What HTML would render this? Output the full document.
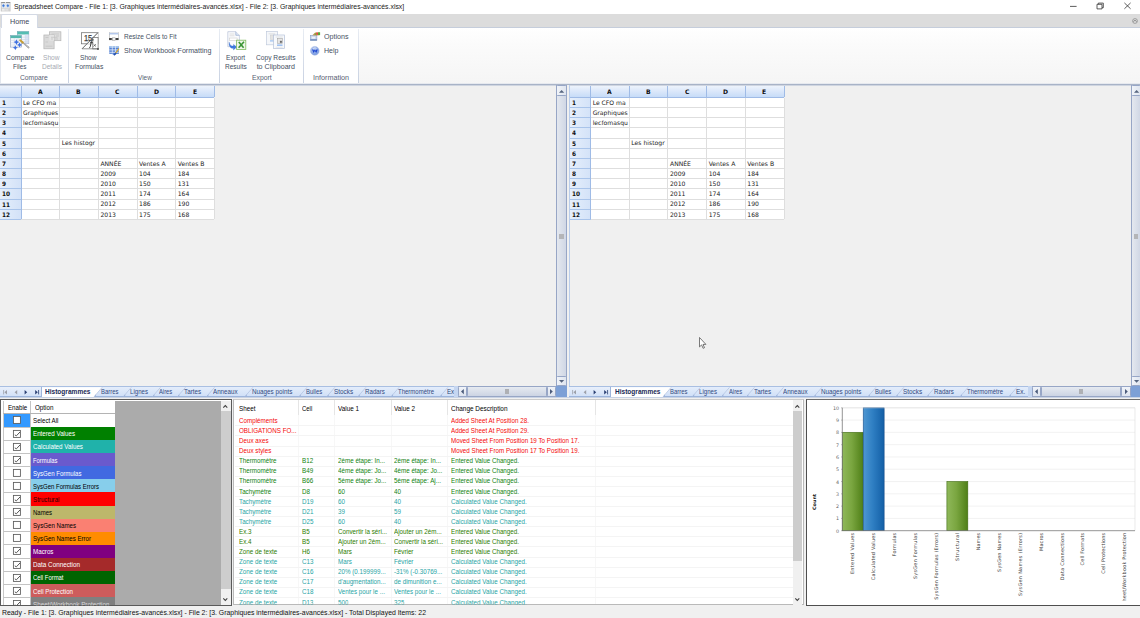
<!DOCTYPE html><html><head><meta charset="utf-8"><title>Spreadsheet Compare</title><style>
*{box-sizing:border-box;margin:0;padding:0}
html,body{width:1140px;height:618px;overflow:hidden;background:#f0f0f0}
body{position:relative;font-family:"Liberation Sans",sans-serif;font-size:7px;color:#000}
.a{position:absolute}
.t{position:absolute;white-space:nowrap;line-height:1;transform-origin:0 50%}
svg{position:absolute;overflow:visible}
</style></head><body>
<div class="a" style="left:0px;top:0px;width:1140px;height:14px;background:#fff;"></div>
<svg style="left:1.0px;top:1.7px" width="9.3" height="9.5" viewBox="0 0 9.3 9.5"><rect x="0" y="0" width="9.3" height="9.5" rx="0.5" fill="#d6d6d6"/><rect x="0.1" y="0.1" width="4.2" height="1" fill="#8c8c8c"/><rect x="4.9" y="0.1" width="4.3" height="1" fill="#8c8c8c"/><rect x="0.5" y="1.1" width="3.8" height="5" fill="#e3e6eb"/><rect x="4.9" y="1.1" width="3.9" height="5" fill="#e3e6eb"/><rect x="4.3" y="0" width="0.6" height="5.6" fill="#f4f4f4"/><path d="M2.45 1.7L4.1 3.7 2.45 5.7 0.8 3.7z" fill="#a9c6f0"/><path d="M6.85 1.7L8.5 3.7 6.85 5.7 5.2 3.7z" fill="#a9c6f0"/><path d="M2.45 2.3L3.7 3.7 2.45 5.1 1.2 3.7z" fill="#3f7ad8"/><path d="M6.85 2.3L8.1 3.7 6.85 5.1 5.6 3.7z" fill="#3f7ad8"/><path d="M0.1 0.1v9.3M9.2 0.1v9.3" stroke="#a8a8a8" stroke-width="0.4"/><rect x="0.9" y="7.2" width="2.7" height="1.3" fill="#f3f3f3"/><rect x="4.4" y="7.4" width="2.6" height="0.9" fill="#ececec"/></svg>
<div class="t" style="left:13.80px;top:4.25px;font-size:7.1px;color:#1a1a1a;font-family:'Liberation Sans',sans-serif;transform:scaleX(0.9693);">Spreadsheet Compare - File 1: [3. Graphiques intermédiaires-avancés.xlsx] - File 2: [3. Graphiques intermédiaires-avancés.xlsx]</div>
<svg style="left:1060px;top:0" width="80" height="14" viewBox="0 0 80 14"><path d="M10 6.4h6.6" stroke="#333" stroke-width="0.8" fill="none"/><path d="M37 4.3h5v4.6h-5zM38.3 4.3V3.1h5v4.6h-1.3" stroke="#333" stroke-width="0.8" fill="none"/><path d="M64.4 2.9l6.2 5.9M70.6 2.9l-6.2 5.9" stroke="#333" stroke-width="0.8" fill="none"/></svg>
<div class="a" style="left:0px;top:14px;width:1140px;height:13px;background:#dcdcdc;"></div>
<div class="a" style="left:0px;top:27px;width:1140px;height:57px;background:linear-gradient(#ffffff,#fbfbfb 30%,#f5f5f5);"></div>
<div class="a" style="left:0px;top:27px;width:358px;height:57px;background:#fff;"></div>
<div class="a" style="left:0px;top:26.6px;width:1140px;height:1px;background:#c5cddb;"></div>
<div class="a" style="left:1.2px;top:14.0px;width:36.4px;height:13.6px;background:#fff;border:1px solid #d3d9e4;border-bottom:none;border-radius:2px 2px 0 0"></div>
<div class="t" style="left:10.00px;top:18.50px;font-size:7.1px;color:#3c4658;font-family:'Liberation Sans',sans-serif;transform:scaleX(1.0139);">Home</div>
<svg style="left:1131.5px;top:18px" width="6" height="6" viewBox="0 0 6 6"><circle cx="3" cy="3" r="2.4" fill="none" stroke="#777" stroke-width="0.6"/><path d="M1.6 3.6L3 2.2l1.4 1.4" stroke="#555" stroke-width="0.7" fill="none"/></svg>
<div class="a" style="left:0px;top:83px;width:1140px;height:1px;background:#e6e9ef;"></div>
<div class="a" style="left:0px;top:84px;width:1140px;height:1px;background:#a8b3c7;"></div>
<div class="a" style="left:0px;top:85px;width:1140px;height:1px;background:#cfd5e0;"></div>
<div class="a" style="left:0px;top:27px;width:1.2px;height:57px;background:#e3e7ee;"></div>
<div class="a" style="left:67.8px;top:28.5px;width:1px;height:54px;background:linear-gradient(#e8ecf3,#c9d2e2);"></div>
<div class="a" style="left:219.1px;top:28.5px;width:1px;height:54px;background:linear-gradient(#e8ecf3,#c9d2e2);"></div>
<div class="a" style="left:302.9px;top:28.5px;width:1px;height:54px;background:linear-gradient(#e8ecf3,#c9d2e2);"></div>
<div class="a" style="left:357.7px;top:28.5px;width:1px;height:54px;background:linear-gradient(#e8ecf3,#c9d2e2);"></div>
<div class="t" style="left:5.80px;top:54.60px;font-size:7.1px;color:#454f62;font-family:'Liberation Sans',sans-serif;transform:scaleX(0.9730);">Compare</div>
<div class="t" style="left:13.30px;top:64.00px;font-size:7.1px;color:#454f62;font-family:'Liberation Sans',sans-serif;transform:scaleX(0.8943);">Files</div>
<div class="t" style="left:43.25px;top:54.60px;font-size:7.1px;color:#a6aab2;font-family:'Liberation Sans',sans-serif;transform:scaleX(0.9296);">Show</div>
<div class="t" style="left:41.50px;top:64.00px;font-size:7.1px;color:#a6aab2;font-family:'Liberation Sans',sans-serif;transform:scaleX(0.9222);">Details</div>
<div class="t" style="left:20.35px;top:75.05px;font-size:7.1px;color:#566072;font-family:'Liberation Sans',sans-serif;transform:scaleX(0.9490);">Compare</div>
<div class="t" style="left:80.45px;top:54.60px;font-size:7.1px;color:#454f62;font-family:'Liberation Sans',sans-serif;transform:scaleX(0.9296);">Show</div>
<div class="t" style="left:74.55px;top:64.00px;font-size:7.1px;color:#454f62;font-family:'Liberation Sans',sans-serif;transform:scaleX(0.9568);">Formulas</div>
<div class="t" style="left:124.20px;top:33.60px;font-size:7.1px;color:#454f62;font-family:'Liberation Sans',sans-serif;transform:scaleX(0.9183);">Resize Cells to Fit</div>
<div class="t" style="left:124.20px;top:47.70px;font-size:7.1px;color:#454f62;font-family:'Liberation Sans',sans-serif;transform:scaleX(1.0011);">Show Workbook Formatting</div>
<div class="t" style="left:137.50px;top:75.05px;font-size:7.1px;color:#566072;font-family:'Liberation Sans',sans-serif;transform:scaleX(0.9049);">View</div>
<div class="t" style="left:226.30px;top:54.60px;font-size:7.1px;color:#454f62;font-family:'Liberation Sans',sans-serif;transform:scaleX(0.9359);">Export</div>
<div class="t" style="left:225.05px;top:64.00px;font-size:7.1px;color:#454f62;font-family:'Liberation Sans',sans-serif;transform:scaleX(0.9173);">Results</div>
<div class="t" style="left:255.75px;top:54.60px;font-size:7.1px;color:#454f62;font-family:'Liberation Sans',sans-serif;transform:scaleX(0.9363);">Copy Results</div>
<div class="t" style="left:256.65px;top:64.00px;font-size:7.1px;color:#454f62;font-family:'Liberation Sans',sans-serif;">to Clipboard</div>
<div class="t" style="left:251.95px;top:75.05px;font-size:7.1px;color:#566072;font-family:'Liberation Sans',sans-serif;transform:scaleX(0.9602);">Export</div>
<div class="t" style="left:323.80px;top:33.70px;font-size:7.1px;color:#454f62;font-family:'Liberation Sans',sans-serif;transform:scaleX(1.0019);">Options</div>
<div class="t" style="left:323.80px;top:47.70px;font-size:7.1px;color:#454f62;font-family:'Liberation Sans',sans-serif;transform:scaleX(0.9936);">Help</div>
<div class="t" style="left:312.80px;top:75.05px;font-size:7.1px;color:#566072;font-family:'Liberation Sans',sans-serif;transform:scaleX(1.0141);">Information</div>
<svg style="left:9.5px;top:30.5px" width="20" height="20" viewBox="0 0 20 20">
<rect x="7.3" y="0.5" width="11.5" height="12.2" fill="#f4f7fb" stroke="#8f9fbd" stroke-width="0.6"/>
<rect x="7.3" y="0.5" width="11.5" height="3" fill="#55bdb2"/>
<path d="M7.3 6.2h11.5M7.3 8.5h11.5M7.3 10.8h11.5M11.3 3.5v9.2M15.3 3.5v9.2" stroke="#c3cde0" stroke-width="0.5"/>
<rect x="15.3" y="3.5" width="3.5" height="9.2" fill="#cfdcf1" opacity="0.7"/>
<rect x="0.5" y="4.5" width="10.9" height="11.6" fill="#f7f9fc" stroke="#8f9fbd" stroke-width="0.6"/>
<rect x="0.5" y="4.5" width="10.9" height="2.6" fill="#55b7ad"/>
<path d="M0.5 9.4h10.9M0.5 11.7h10.9M0.5 14h10.9M4.3 7.1v9M8 7.1v9" stroke="#cdd5e4" stroke-width="0.5"/>
<path d="M6.4 8.3l0.9 1.9 1.9 0.9-1.9 0.9-0.9 1.9-0.9-1.9-1.9-0.9 1.9-0.9z" fill="#3d6fe0"/>
<path d="M9.6 11.4l0.8 1.7 1.7 0.8-1.7 0.8-0.8 1.7-0.8-1.7-1.7-0.8 1.7-0.8z" fill="#3d6fe0"/>
<path d="M5.3 14.2l0.8 1.7 1.7 0.8-1.7 0.8-0.8 1.7-0.8-1.7-1.7-0.8 1.7-0.8z" fill="#3d6fe0"/>
<path d="M12.5 11.2l6.2 5.4" stroke="#8c8c8c" stroke-width="1.5" stroke-linecap="round"/>
<path d="M12.7 11.4l5.7 5" stroke="#e6e6e6" stroke-width="0.6" stroke-linecap="round"/>
<path d="M10.2 9.2l2.6 2.3" stroke="#c9a032" stroke-width="1.9" stroke-linecap="round"/>
</svg>
<svg style="left:42.5px;top:30.5px" width="20" height="20" viewBox="0 0 20 20">
<rect x="6.4" y="0.8" width="11.5" height="8.9" fill="#dedede" stroke="#b4b4b4" stroke-width="0.7"/>
<path d="M8.5 3h7.5M8.5 5h2M13 5h3M9 7h2" stroke="#c2c2c2" stroke-width="0.7"/>
<rect x="0.9" y="4" width="10.2" height="13.8" fill="#dadada" stroke="#b4b4b4" stroke-width="0.7"/>
<rect x="6.4" y="4" width="4.7" height="5.7" fill="#e4e4e4"/>
<path d="M2.5 6.5h3M2.5 11h2.5M2.5 15.2h7M8 6.3h6.5M8 8h2M12 8h3" stroke="#c0c0c0" stroke-width="0.7"/>
</svg>
<svg style="left:80.5px;top:31.5px" width="19" height="19" viewBox="0 0 19 19">
<rect x="0.6" y="0.7" width="16.3" height="11.1" fill="#fff" stroke="#707070" stroke-width="0.75"/>
<path d="M16.9 0.7L5.8 11.8h11.1z" fill="#fff"/>
<rect x="11.8" y="5.5" width="5.3" height="11.4" fill="#fff" stroke="#707070" stroke-width="0.75"/>
<path d="M16.9 0.7L1.1 16.8h16" stroke="#707070" stroke-width="0.75" fill="none"/>
<circle cx="17" cy="17" r="0.95" fill="#4a4a4a"/>
<text x="2.9" y="9" font-family="Liberation Sans,sans-serif" font-size="9.8" fill="#3c3c3c" stroke="#3c3c3c" stroke-width="0.25" textLength="8.3" lengthAdjust="spacingAndGlyphs">15</text>
<path d="M16.9 0.7L1.1 16.8" stroke="#707070" stroke-width="0.75" fill="none"/>
<path d="M12.7 7.9c-1.6-0.5-2.2 0.6-2.4 1.9L9.3 14.6c-0.2 0.9-0.5 1.1-1.2 0.9M9.2 10.7h2.6" stroke="#2e2e2e" stroke-width="0.95" fill="none"/>
<path d="M12.5 12.2l2.4 2.3M15 12.2l-2.6 2.3" stroke="#3c3c3c" stroke-width="0.65" fill="none"/>
</svg>
<svg style="left:108.6px;top:32px" width="10" height="9" viewBox="0 0 10 9">
<rect x="0.35" y="0.4" width="8.9" height="7.5" fill="#fff" stroke="#a0a0a0" stroke-width="0.5"/>
<rect x="0.35" y="0.4" width="8.9" height="1.3" fill="#eef2f9"/>
<path d="M0.4 1.85h8.8" stroke="#4f80d4" stroke-width="0.6"/>
<rect x="0.1" y="6.1" width="9.4" height="1.8" fill="#2e2e2e"/>
<rect x="3.3" y="5.8" width="2.9" height="2.6" fill="#f0f0f0" stroke="#8a8a8a" stroke-width="0.4"/>
<path d="M2.7 6.3v1.4L3.3 7zM6.8 6.3v1.4L6.2 7z" fill="#fff"/>
</svg>
<svg style="left:108.6px;top:46px" width="10.5" height="9.5" viewBox="0 0 10.5 9.5">
<rect x="0.3" y="0.2" width="9.6" height="7.6" fill="#3f72cc"/>
<rect x="0.3" y="0.2" width="9.6" height="1.6" fill="#b7d3f2"/>
<path d="M0.3 3.3h9.6M0.3 4.9h9.6M0.3 6.5h9.6" stroke="#e6eefb" stroke-width="0.7"/>
<path d="M3.3 0.2v7.6M6.5 0.2v7.6" stroke="#e6eefb" stroke-width="0.7"/>
<path d="M2.6 7.8l3 1.4 2.6-1.6" fill="#2f63c4"/>
<path d="M9.7 3L6.6 7.2" stroke="#e0ac2a" stroke-width="1.2" stroke-linecap="round"/>
<path d="M6.6 7.2L5.4 8.8" stroke="#2452b0" stroke-width="1.4" stroke-linecap="round"/>
</svg>
<svg style="left:226.5px;top:30.5px" width="20" height="20" viewBox="0 0 20 20">
<path d="M0.8 0.7h8l3.6 3.6v11.4H0.8z" fill="#fbfcfe" stroke="#a9b6cf" stroke-width="0.6"/>
<path d="M8.8 0.7v3.6h3.6" fill="#dfe7f4" stroke="#8aa0c8" stroke-width="0.6"/>
<path d="M2.5 3h5M2.5 4.8h5" stroke="#c9c9c9" stroke-width="0.6"/>
<rect x="2.5" y="7" width="7.6" height="2.3" fill="#fff" stroke="#c4c4c4" stroke-width="0.5"/>
<path d="M2.2 11.2c0.3 3 2.2 4 4.3 3.9v-1.7l3.2 2.7-3.2 2.8v-1.6c-3.2 0.3-4.9-2.6-4.3-6.1z" fill="#3f7be0" stroke="#2d5fc0" stroke-width="0.3"/>
<rect x="9.6" y="9.2" width="9.2" height="9.2" fill="#eef6e8" stroke="#7fbb5e" stroke-width="0.8"/>
<path d="M11.8 11l4.8 5.8M17 10.8l-5.4 6" stroke="#3a9433" stroke-width="1.6"/>
</svg>
<svg style="left:266px;top:30.5px" width="20" height="19" viewBox="0 0 20 19">
<rect x="0.6" y="0.6" width="10.8" height="13.2" fill="#f5f7fa" stroke="#c0cadc" stroke-width="0.7"/>
<path d="M2.6 2.8h6.5" stroke="#d0d0d0" stroke-width="0.6"/>
<rect x="4.4" y="4" width="4.5" height="4.5" fill="#e3e3e3" stroke="#c6c6c6" stroke-width="0.4"/>
<rect x="4" y="9.3" width="4.5" height="1.2" fill="#9cc0f0"/>
<rect x="7.6" y="4" width="10.8" height="13.5" fill="#f7f9fc" stroke="#b4c0d8" stroke-width="0.7"/>
<path d="M9.7 6h7" stroke="#d0d0d0" stroke-width="0.6"/>
<rect x="11.4" y="7.3" width="5" height="5" fill="#e6e6e6" stroke="#9a9a9a" stroke-width="0.5"/>
<rect x="13.9" y="9.8" width="2" height="2" fill="#6c6c6c"/>
<rect x="11" y="13.5" width="5.5" height="1.3" fill="#8db6ee"/>
<path d="M9.7 16.3h7" stroke="#d6d6d6" stroke-width="0.5"/>
</svg>
<svg style="left:309.6px;top:31.8px" width="10.5" height="9" viewBox="0 0 10.5 9">
<rect x="0.3" y="3.4" width="6.6" height="5.1" fill="#c9d6ea" stroke="#7f96bd" stroke-width="0.5"/>
<rect x="0.3" y="7.2" width="6.6" height="1.3" fill="#6d89b8"/>
<path d="M1.8 4.8h3.4v1.8H1.8z" fill="#eef3fa"/>
<path d="M2.3 3.3L5.2 0.6l4.8 0.2v2.3L6.9 3.4z" fill="#c29a5a"/>
<rect x="6.2" y="0.5" width="1.8" height="2.2" fill="#e8473c"/>
<rect x="8" y="0.3" width="2.1" height="2.8" fill="#58a83a"/>
<rect x="4.7" y="1.2" width="1.5" height="1.8" fill="#8aa33c"/>
</svg>
<svg style="left:309.8px;top:45.6px" width="9.6" height="9.6" viewBox="0 0 9.6 9.6">
<defs><radialGradient id="hg" cx="0.4" cy="0.35" r="0.7"><stop offset="0" stop-color="#b9cdf3"/><stop offset="1" stop-color="#6f92dc"/></radialGradient></defs>
<circle cx="4.8" cy="4.8" r="4.4" fill="url(#hg)" stroke="#a9bde6" stroke-width="0.5"/>
<path d="M2 3.4l1.6 3.6 1.3-2 1.3 2 1.6-3.6-1.4 0.2-0.6 1.2-0.9-1.6-0.9 1.6-0.6-1.2z" fill="#1b44d0"/>
<path d="M3.2 2.6c1-0.9 2.4-0.9 3.3 0" stroke="#e9f0fc" stroke-width="0.7" fill="none"/>
</svg>
<div class="a" style="left:21.05px;top:97.5px;width:193.35000000000002px;height:121.80000000000001px;background:#fff;"></div>
<div class="a" style="left:0px;top:85.7px;width:214.40000000000003px;height:11.799999999999997px;background:linear-gradient(#edf3fc,#dce8fa 45%,#c7dcf8);"></div>
<div class="a" style="left:0px;top:97.5px;width:21.05px;height:121.80000000000001px;background:linear-gradient(90deg,#e6effb,#d3e2f8);"></div>
<div class="a" style="left:21.05px;top:107.15px;width:193.4px;height:1px;background:#dedede"></div><div class="a" style="left:0px;top:107.15px;width:21.1px;height:1px;background:#a9c4ea"></div><div class="a" style="left:21.05px;top:117.30px;width:193.4px;height:1px;background:#dedede"></div><div class="a" style="left:0px;top:117.30px;width:21.1px;height:1px;background:#a9c4ea"></div><div class="a" style="left:21.05px;top:127.45px;width:193.4px;height:1px;background:#dedede"></div><div class="a" style="left:0px;top:127.45px;width:21.1px;height:1px;background:#a9c4ea"></div><div class="a" style="left:21.05px;top:137.60px;width:193.4px;height:1px;background:#dedede"></div><div class="a" style="left:0px;top:137.60px;width:21.1px;height:1px;background:#a9c4ea"></div><div class="a" style="left:21.05px;top:147.75px;width:193.4px;height:1px;background:#dedede"></div><div class="a" style="left:0px;top:147.75px;width:21.1px;height:1px;background:#a9c4ea"></div><div class="a" style="left:21.05px;top:157.90px;width:193.4px;height:1px;background:#dedede"></div><div class="a" style="left:0px;top:157.90px;width:21.1px;height:1px;background:#a9c4ea"></div><div class="a" style="left:21.05px;top:168.05px;width:193.4px;height:1px;background:#dedede"></div><div class="a" style="left:0px;top:168.05px;width:21.1px;height:1px;background:#a9c4ea"></div><div class="a" style="left:21.05px;top:178.20px;width:193.4px;height:1px;background:#dedede"></div><div class="a" style="left:0px;top:178.20px;width:21.1px;height:1px;background:#a9c4ea"></div><div class="a" style="left:21.05px;top:188.35px;width:193.4px;height:1px;background:#dedede"></div><div class="a" style="left:0px;top:188.35px;width:21.1px;height:1px;background:#a9c4ea"></div><div class="a" style="left:21.05px;top:198.50px;width:193.4px;height:1px;background:#dedede"></div><div class="a" style="left:0px;top:198.50px;width:21.1px;height:1px;background:#a9c4ea"></div><div class="a" style="left:21.05px;top:208.65px;width:193.4px;height:1px;background:#dedede"></div><div class="a" style="left:0px;top:208.65px;width:21.1px;height:1px;background:#a9c4ea"></div><div class="a" style="left:21.05px;top:218.80px;width:193.4px;height:1px;background:#dedede"></div><div class="a" style="left:0px;top:218.80px;width:21.1px;height:1px;background:#a9c4ea"></div><div class="a" style="left:59.22px;top:97.5px;width:1px;height:121.8px;background:#dedede"></div><div class="a" style="left:97.89px;top:97.5px;width:1px;height:121.8px;background:#dedede"></div><div class="a" style="left:136.56px;top:97.5px;width:1px;height:121.8px;background:#dedede"></div><div class="a" style="left:175.23px;top:97.5px;width:1px;height:121.8px;background:#dedede"></div><div class="a" style="left:213.90px;top:97.5px;width:1px;height:121.8px;background:#dedede"></div><div class="a" style="left:20.55px;top:85.7px;width:1px;height:11.8px;background:#9fbbe6"></div><div class="a" style="left:59.22px;top:85.7px;width:1px;height:11.8px;background:#9fbbe6"></div><div class="a" style="left:97.89px;top:85.7px;width:1px;height:11.8px;background:#9fbbe6"></div><div class="a" style="left:136.56px;top:85.7px;width:1px;height:11.8px;background:#9fbbe6"></div><div class="a" style="left:175.23px;top:85.7px;width:1px;height:11.8px;background:#9fbbe6"></div><div class="a" style="left:213.90px;top:85.7px;width:1px;height:11.8px;background:#9fbbe6"></div><div class="a" style="left:20.55px;top:97.5px;width:1px;height:121.8px;background:#9fbbe6"></div><div class="a" style="left:0px;top:97.00px;width:214.4px;height:1px;background:#9fbbe6"></div>
<div class="t" style="left:37.78px;top:88.80px;font-size:6.2px;color:#111;font-family:'DejaVu Sans',sans-serif;font-weight:bold;transform:scaleX(0.9800);">A</div>
<div class="t" style="left:76.49px;top:88.80px;font-size:6.2px;color:#111;font-family:'DejaVu Sans',sans-serif;font-weight:bold;transform:scaleX(0.9800);">B</div>
<div class="t" style="left:115.24px;top:88.80px;font-size:6.2px;color:#111;font-family:'DejaVu Sans',sans-serif;font-weight:bold;transform:scaleX(0.9800);">C</div>
<div class="t" style="left:153.63px;top:88.80px;font-size:6.2px;color:#111;font-family:'DejaVu Sans',sans-serif;font-weight:bold;transform:scaleX(0.9800);">D</div>
<div class="t" style="left:192.73px;top:88.80px;font-size:6.2px;color:#111;font-family:'DejaVu Sans',sans-serif;font-weight:bold;transform:scaleX(0.9800);">E</div>
<div class="t" style="left:2.40px;top:100.03px;font-size:6.1px;color:#111;font-family:'DejaVu Sans',sans-serif;font-weight:bold;transform:scaleX(0.9500);">1</div>
<div class="t" style="left:2.40px;top:110.17px;font-size:6.1px;color:#111;font-family:'DejaVu Sans',sans-serif;font-weight:bold;transform:scaleX(0.9500);">2</div>
<div class="t" style="left:2.40px;top:120.33px;font-size:6.1px;color:#111;font-family:'DejaVu Sans',sans-serif;font-weight:bold;transform:scaleX(0.9500);">3</div>
<div class="t" style="left:2.40px;top:130.47px;font-size:6.1px;color:#111;font-family:'DejaVu Sans',sans-serif;font-weight:bold;transform:scaleX(0.9500);">4</div>
<div class="t" style="left:2.40px;top:140.62px;font-size:6.1px;color:#111;font-family:'DejaVu Sans',sans-serif;font-weight:bold;transform:scaleX(0.9500);">5</div>
<div class="t" style="left:2.40px;top:150.77px;font-size:6.1px;color:#111;font-family:'DejaVu Sans',sans-serif;font-weight:bold;transform:scaleX(0.9500);">6</div>
<div class="t" style="left:2.40px;top:160.93px;font-size:6.1px;color:#111;font-family:'DejaVu Sans',sans-serif;font-weight:bold;transform:scaleX(0.9500);">7</div>
<div class="t" style="left:2.40px;top:171.07px;font-size:6.1px;color:#111;font-family:'DejaVu Sans',sans-serif;font-weight:bold;transform:scaleX(0.9500);">8</div>
<div class="t" style="left:2.40px;top:181.22px;font-size:6.1px;color:#111;font-family:'DejaVu Sans',sans-serif;font-weight:bold;transform:scaleX(0.9500);">9</div>
<div class="t" style="left:2.40px;top:191.38px;font-size:6.1px;color:#111;font-family:'DejaVu Sans',sans-serif;font-weight:bold;transform:scaleX(0.9500);">10</div>
<div class="t" style="left:2.40px;top:201.52px;font-size:6.1px;color:#111;font-family:'DejaVu Sans',sans-serif;font-weight:bold;transform:scaleX(0.9500);">11</div>
<div class="t" style="left:2.40px;top:211.68px;font-size:6.1px;color:#111;font-family:'DejaVu Sans',sans-serif;font-weight:bold;transform:scaleX(0.9500);">12</div>
<div class="t" style="left:23.05px;top:99.88px;font-size:6.1px;color:#1c1c1c;font-family:'DejaVu Sans',sans-serif;">Le CFO ma</div>
<div class="t" style="left:23.05px;top:110.02px;font-size:6.1px;color:#1c1c1c;font-family:'DejaVu Sans',sans-serif;">Graphiques</div>
<div class="t" style="left:23.05px;top:120.17px;font-size:6.1px;color:#1c1c1c;font-family:'DejaVu Sans',sans-serif;">lecfomasqu</div>
<div class="t" style="left:61.72px;top:140.47px;font-size:6.1px;color:#1c1c1c;font-family:'DejaVu Sans',sans-serif;">Les histogr</div>
<div class="t" style="left:100.39px;top:160.78px;font-size:6.1px;color:#1c1c1c;font-family:'DejaVu Sans',sans-serif;">ANNÉE</div>
<div class="t" style="left:139.06px;top:160.78px;font-size:6.1px;color:#1c1c1c;font-family:'DejaVu Sans',sans-serif;">Ventes A</div>
<div class="t" style="left:177.73px;top:160.78px;font-size:6.1px;color:#1c1c1c;font-family:'DejaVu Sans',sans-serif;">Ventes B</div>
<div class="t" style="left:100.39px;top:170.92px;font-size:6.1px;color:#1c1c1c;font-family:'DejaVu Sans',sans-serif;">2009</div>
<div class="t" style="left:139.06px;top:170.92px;font-size:6.1px;color:#1c1c1c;font-family:'DejaVu Sans',sans-serif;">104</div>
<div class="t" style="left:177.73px;top:170.92px;font-size:6.1px;color:#1c1c1c;font-family:'DejaVu Sans',sans-serif;">184</div>
<div class="t" style="left:100.39px;top:181.07px;font-size:6.1px;color:#1c1c1c;font-family:'DejaVu Sans',sans-serif;">2010</div>
<div class="t" style="left:139.06px;top:181.07px;font-size:6.1px;color:#1c1c1c;font-family:'DejaVu Sans',sans-serif;">150</div>
<div class="t" style="left:177.73px;top:181.07px;font-size:6.1px;color:#1c1c1c;font-family:'DejaVu Sans',sans-serif;">131</div>
<div class="t" style="left:100.39px;top:191.22px;font-size:6.1px;color:#1c1c1c;font-family:'DejaVu Sans',sans-serif;">2011</div>
<div class="t" style="left:139.06px;top:191.22px;font-size:6.1px;color:#1c1c1c;font-family:'DejaVu Sans',sans-serif;">174</div>
<div class="t" style="left:177.73px;top:191.22px;font-size:6.1px;color:#1c1c1c;font-family:'DejaVu Sans',sans-serif;">164</div>
<div class="t" style="left:100.39px;top:201.37px;font-size:6.1px;color:#1c1c1c;font-family:'DejaVu Sans',sans-serif;">2012</div>
<div class="t" style="left:139.06px;top:201.37px;font-size:6.1px;color:#1c1c1c;font-family:'DejaVu Sans',sans-serif;">186</div>
<div class="t" style="left:177.73px;top:201.37px;font-size:6.1px;color:#1c1c1c;font-family:'DejaVu Sans',sans-serif;">190</div>
<div class="t" style="left:100.39px;top:211.53px;font-size:6.1px;color:#1c1c1c;font-family:'DejaVu Sans',sans-serif;">2013</div>
<div class="t" style="left:139.06px;top:211.53px;font-size:6.1px;color:#1c1c1c;font-family:'DejaVu Sans',sans-serif;">175</div>
<div class="t" style="left:177.73px;top:211.53px;font-size:6.1px;color:#1c1c1c;font-family:'DejaVu Sans',sans-serif;">168</div>
<div class="a" style="left:590.65px;top:97.5px;width:193.35000000000002px;height:121.80000000000001px;background:#fff;"></div>
<div class="a" style="left:569.6px;top:85.7px;width:214.39999999999998px;height:11.799999999999997px;background:linear-gradient(#edf3fc,#dce8fa 45%,#c7dcf8);"></div>
<div class="a" style="left:569.6px;top:97.5px;width:21.049999999999955px;height:121.80000000000001px;background:linear-gradient(90deg,#e6effb,#d3e2f8);"></div>
<div class="a" style="left:590.65px;top:107.15px;width:193.4px;height:1px;background:#dedede"></div><div class="a" style="left:569.6px;top:107.15px;width:21.0px;height:1px;background:#a9c4ea"></div><div class="a" style="left:590.65px;top:117.30px;width:193.4px;height:1px;background:#dedede"></div><div class="a" style="left:569.6px;top:117.30px;width:21.0px;height:1px;background:#a9c4ea"></div><div class="a" style="left:590.65px;top:127.45px;width:193.4px;height:1px;background:#dedede"></div><div class="a" style="left:569.6px;top:127.45px;width:21.0px;height:1px;background:#a9c4ea"></div><div class="a" style="left:590.65px;top:137.60px;width:193.4px;height:1px;background:#dedede"></div><div class="a" style="left:569.6px;top:137.60px;width:21.0px;height:1px;background:#a9c4ea"></div><div class="a" style="left:590.65px;top:147.75px;width:193.4px;height:1px;background:#dedede"></div><div class="a" style="left:569.6px;top:147.75px;width:21.0px;height:1px;background:#a9c4ea"></div><div class="a" style="left:590.65px;top:157.90px;width:193.4px;height:1px;background:#dedede"></div><div class="a" style="left:569.6px;top:157.90px;width:21.0px;height:1px;background:#a9c4ea"></div><div class="a" style="left:590.65px;top:168.05px;width:193.4px;height:1px;background:#dedede"></div><div class="a" style="left:569.6px;top:168.05px;width:21.0px;height:1px;background:#a9c4ea"></div><div class="a" style="left:590.65px;top:178.20px;width:193.4px;height:1px;background:#dedede"></div><div class="a" style="left:569.6px;top:178.20px;width:21.0px;height:1px;background:#a9c4ea"></div><div class="a" style="left:590.65px;top:188.35px;width:193.4px;height:1px;background:#dedede"></div><div class="a" style="left:569.6px;top:188.35px;width:21.0px;height:1px;background:#a9c4ea"></div><div class="a" style="left:590.65px;top:198.50px;width:193.4px;height:1px;background:#dedede"></div><div class="a" style="left:569.6px;top:198.50px;width:21.0px;height:1px;background:#a9c4ea"></div><div class="a" style="left:590.65px;top:208.65px;width:193.4px;height:1px;background:#dedede"></div><div class="a" style="left:569.6px;top:208.65px;width:21.0px;height:1px;background:#a9c4ea"></div><div class="a" style="left:590.65px;top:218.80px;width:193.4px;height:1px;background:#dedede"></div><div class="a" style="left:569.6px;top:218.80px;width:21.0px;height:1px;background:#a9c4ea"></div><div class="a" style="left:628.82px;top:97.5px;width:1px;height:121.8px;background:#dedede"></div><div class="a" style="left:667.49px;top:97.5px;width:1px;height:121.8px;background:#dedede"></div><div class="a" style="left:706.16px;top:97.5px;width:1px;height:121.8px;background:#dedede"></div><div class="a" style="left:744.83px;top:97.5px;width:1px;height:121.8px;background:#dedede"></div><div class="a" style="left:783.50px;top:97.5px;width:1px;height:121.8px;background:#dedede"></div><div class="a" style="left:590.15px;top:85.7px;width:1px;height:11.8px;background:#9fbbe6"></div><div class="a" style="left:628.82px;top:85.7px;width:1px;height:11.8px;background:#9fbbe6"></div><div class="a" style="left:667.49px;top:85.7px;width:1px;height:11.8px;background:#9fbbe6"></div><div class="a" style="left:706.16px;top:85.7px;width:1px;height:11.8px;background:#9fbbe6"></div><div class="a" style="left:744.83px;top:85.7px;width:1px;height:11.8px;background:#9fbbe6"></div><div class="a" style="left:783.50px;top:85.7px;width:1px;height:11.8px;background:#9fbbe6"></div><div class="a" style="left:590.15px;top:97.5px;width:1px;height:121.8px;background:#9fbbe6"></div><div class="a" style="left:569.6px;top:97.00px;width:214.4px;height:1px;background:#9fbbe6"></div>
<div class="t" style="left:607.38px;top:88.80px;font-size:6.2px;color:#111;font-family:'DejaVu Sans',sans-serif;font-weight:bold;transform:scaleX(0.9800);">A</div>
<div class="t" style="left:646.09px;top:88.80px;font-size:6.2px;color:#111;font-family:'DejaVu Sans',sans-serif;font-weight:bold;transform:scaleX(0.9800);">B</div>
<div class="t" style="left:684.84px;top:88.80px;font-size:6.2px;color:#111;font-family:'DejaVu Sans',sans-serif;font-weight:bold;transform:scaleX(0.9800);">C</div>
<div class="t" style="left:723.23px;top:88.80px;font-size:6.2px;color:#111;font-family:'DejaVu Sans',sans-serif;font-weight:bold;transform:scaleX(0.9800);">D</div>
<div class="t" style="left:762.33px;top:88.80px;font-size:6.2px;color:#111;font-family:'DejaVu Sans',sans-serif;font-weight:bold;transform:scaleX(0.9800);">E</div>
<div class="t" style="left:572.00px;top:100.03px;font-size:6.1px;color:#111;font-family:'DejaVu Sans',sans-serif;font-weight:bold;transform:scaleX(0.9500);">1</div>
<div class="t" style="left:572.00px;top:110.17px;font-size:6.1px;color:#111;font-family:'DejaVu Sans',sans-serif;font-weight:bold;transform:scaleX(0.9500);">2</div>
<div class="t" style="left:572.00px;top:120.33px;font-size:6.1px;color:#111;font-family:'DejaVu Sans',sans-serif;font-weight:bold;transform:scaleX(0.9500);">3</div>
<div class="t" style="left:572.00px;top:130.47px;font-size:6.1px;color:#111;font-family:'DejaVu Sans',sans-serif;font-weight:bold;transform:scaleX(0.9500);">4</div>
<div class="t" style="left:572.00px;top:140.62px;font-size:6.1px;color:#111;font-family:'DejaVu Sans',sans-serif;font-weight:bold;transform:scaleX(0.9500);">5</div>
<div class="t" style="left:572.00px;top:150.77px;font-size:6.1px;color:#111;font-family:'DejaVu Sans',sans-serif;font-weight:bold;transform:scaleX(0.9500);">6</div>
<div class="t" style="left:572.00px;top:160.93px;font-size:6.1px;color:#111;font-family:'DejaVu Sans',sans-serif;font-weight:bold;transform:scaleX(0.9500);">7</div>
<div class="t" style="left:572.00px;top:171.07px;font-size:6.1px;color:#111;font-family:'DejaVu Sans',sans-serif;font-weight:bold;transform:scaleX(0.9500);">8</div>
<div class="t" style="left:572.00px;top:181.22px;font-size:6.1px;color:#111;font-family:'DejaVu Sans',sans-serif;font-weight:bold;transform:scaleX(0.9500);">9</div>
<div class="t" style="left:572.00px;top:191.38px;font-size:6.1px;color:#111;font-family:'DejaVu Sans',sans-serif;font-weight:bold;transform:scaleX(0.9500);">10</div>
<div class="t" style="left:572.00px;top:201.52px;font-size:6.1px;color:#111;font-family:'DejaVu Sans',sans-serif;font-weight:bold;transform:scaleX(0.9500);">11</div>
<div class="t" style="left:572.00px;top:211.68px;font-size:6.1px;color:#111;font-family:'DejaVu Sans',sans-serif;font-weight:bold;transform:scaleX(0.9500);">12</div>
<div class="t" style="left:592.65px;top:99.88px;font-size:6.1px;color:#1c1c1c;font-family:'DejaVu Sans',sans-serif;">Le CFO ma</div>
<div class="t" style="left:592.65px;top:110.02px;font-size:6.1px;color:#1c1c1c;font-family:'DejaVu Sans',sans-serif;">Graphiques</div>
<div class="t" style="left:592.65px;top:120.17px;font-size:6.1px;color:#1c1c1c;font-family:'DejaVu Sans',sans-serif;">lecfomasqu</div>
<div class="t" style="left:631.32px;top:140.47px;font-size:6.1px;color:#1c1c1c;font-family:'DejaVu Sans',sans-serif;">Les histogr</div>
<div class="t" style="left:669.99px;top:160.78px;font-size:6.1px;color:#1c1c1c;font-family:'DejaVu Sans',sans-serif;">ANNÉE</div>
<div class="t" style="left:708.66px;top:160.78px;font-size:6.1px;color:#1c1c1c;font-family:'DejaVu Sans',sans-serif;">Ventes A</div>
<div class="t" style="left:747.33px;top:160.78px;font-size:6.1px;color:#1c1c1c;font-family:'DejaVu Sans',sans-serif;">Ventes B</div>
<div class="t" style="left:669.99px;top:170.92px;font-size:6.1px;color:#1c1c1c;font-family:'DejaVu Sans',sans-serif;">2009</div>
<div class="t" style="left:708.66px;top:170.92px;font-size:6.1px;color:#1c1c1c;font-family:'DejaVu Sans',sans-serif;">104</div>
<div class="t" style="left:747.33px;top:170.92px;font-size:6.1px;color:#1c1c1c;font-family:'DejaVu Sans',sans-serif;">184</div>
<div class="t" style="left:669.99px;top:181.07px;font-size:6.1px;color:#1c1c1c;font-family:'DejaVu Sans',sans-serif;">2010</div>
<div class="t" style="left:708.66px;top:181.07px;font-size:6.1px;color:#1c1c1c;font-family:'DejaVu Sans',sans-serif;">150</div>
<div class="t" style="left:747.33px;top:181.07px;font-size:6.1px;color:#1c1c1c;font-family:'DejaVu Sans',sans-serif;">131</div>
<div class="t" style="left:669.99px;top:191.22px;font-size:6.1px;color:#1c1c1c;font-family:'DejaVu Sans',sans-serif;">2011</div>
<div class="t" style="left:708.66px;top:191.22px;font-size:6.1px;color:#1c1c1c;font-family:'DejaVu Sans',sans-serif;">174</div>
<div class="t" style="left:747.33px;top:191.22px;font-size:6.1px;color:#1c1c1c;font-family:'DejaVu Sans',sans-serif;">164</div>
<div class="t" style="left:669.99px;top:201.37px;font-size:6.1px;color:#1c1c1c;font-family:'DejaVu Sans',sans-serif;">2012</div>
<div class="t" style="left:708.66px;top:201.37px;font-size:6.1px;color:#1c1c1c;font-family:'DejaVu Sans',sans-serif;">186</div>
<div class="t" style="left:747.33px;top:201.37px;font-size:6.1px;color:#1c1c1c;font-family:'DejaVu Sans',sans-serif;">190</div>
<div class="t" style="left:669.99px;top:211.53px;font-size:6.1px;color:#1c1c1c;font-family:'DejaVu Sans',sans-serif;">2013</div>
<div class="t" style="left:708.66px;top:211.53px;font-size:6.1px;color:#1c1c1c;font-family:'DejaVu Sans',sans-serif;">175</div>
<div class="t" style="left:747.33px;top:211.53px;font-size:6.1px;color:#1c1c1c;font-family:'DejaVu Sans',sans-serif;">168</div>
<div class="a" style="left:556.2px;top:85.2px;width:10.6px;height:301.0px;background:linear-gradient(90deg,#e4e8ef,#d0d7e5);border-left:1px solid #97a6c6;border-right:1px solid #97a6c6"></div>
<div class="a" style="left:556.2px;top:85.2px;width:10.6px;height:11.2px;background:linear-gradient(90deg,#f1f4f9,#dfe5ef);border:1px solid #97a6c6;border-radius:1.5px"></div>
<svg style="left:558.90px;top:89.70px" width="5.2" height="2.8" viewBox="0 0 5.2 2.8"><path d="M0 2.8L2.6 0l2.6 2.8z" fill="#56657f"/></svg>
<div class="a" style="left:556.2px;top:376.2px;width:10.6px;height:10.0px;background:linear-gradient(90deg,#f1f4f9,#dfe5ef);border:1px solid #97a6c6;border-radius:1.5px"></div>
<svg style="left:558.90px;top:380.20px" width="5.2" height="2.8" viewBox="0 0 5.2 2.8"><path d="M0 0h5.2L2.6 2.8z" fill="#56657f"/></svg>
<div class="a" style="left:559.3px;top:234.4px;width:4.4px;height:4.4px;background:#b4b5b8;"></div>
<div class="a" style="left:1130.8px;top:85.2px;width:10.6px;height:301.0px;background:linear-gradient(90deg,#e4e8ef,#d0d7e5);border-left:1px solid #97a6c6;border-right:1px solid #97a6c6"></div>
<div class="a" style="left:1130.8px;top:85.2px;width:10.6px;height:11.2px;background:linear-gradient(90deg,#f1f4f9,#dfe5ef);border:1px solid #97a6c6;border-radius:1.5px"></div>
<svg style="left:1133.50px;top:89.70px" width="5.2" height="2.8" viewBox="0 0 5.2 2.8"><path d="M0 2.8L2.6 0l2.6 2.8z" fill="#56657f"/></svg>
<div class="a" style="left:1130.8px;top:376.2px;width:10.6px;height:10.0px;background:linear-gradient(90deg,#f1f4f9,#dfe5ef);border:1px solid #97a6c6;border-radius:1.5px"></div>
<svg style="left:1133.50px;top:380.20px" width="5.2" height="2.8" viewBox="0 0 5.2 2.8"><path d="M0 0h5.2L2.6 2.8z" fill="#56657f"/></svg>
<div class="a" style="left:1133.8999999999999px;top:234.4px;width:4.4px;height:4.4px;background:#b4b5b8;"></div>
<div class="a" style="left:566.8px;top:85px;width:2.7px;height:315px;background:#f0f0f0;"></div>
<div class="a" style="left:569.1px;top:85px;width:0.8px;height:301.5px;background:#b9cdeb;"></div>
<div class="a" style="left:0px;top:386.7px;width:454.2px;height:9.9px;background:linear-gradient(#e4edfb,#cfdff7);"></div>
<div class="a" style="left:0px;top:386.3px;width:454.2px;height:0.9px;background:#a9bfe2;"></div>
<div class="a" style="left:0px;top:396.2px;width:454.2px;height:0.9px;background:#9db5dc;"></div>
<div class="a" style="left:0px;top:387.2px;width:41.6px;height:9.0px;background:linear-gradient(#e9f0fb,#d3e1f7);border-right:1px solid #9db5dc"></div>
<svg style="left:0px;top:386.7px" width="42" height="9.9" viewBox="0 0 42 9.9"><path d="M3.6 3v4.4" stroke="#9c9fa8" stroke-width="0.8"/><path d="M7 3v4.4L4.4 5.2z" fill="#9c9fa8"/><path d="M17.2 3v4.4L14.6 5.2z" fill="#9c9fa8"/><path d="M24.6 3v4.4l2.6-2.2z" fill="#2a3f72"/><path d="M35.2 3v4.4l2.6-2.2z" fill="#2a3f72"/><path d="M38.6 3v4.4" stroke="#2a3f72" stroke-width="0.8"/></svg>
<svg style="left:0px;top:386.7px" width="454.2" height="9.9" viewBox="0 0 454.2 9.9"><path d="M41.8 0.2H102L94 9.9H41.8z" fill="#fff"/><path d="M102.0 0.4L94.0 9.700000000000001" stroke="#afc0e0" stroke-width="0.7" fill="none"/><path d="M93.9 9.8l2-2.5v2.5z" fill="#9db3da"/><path d="M131.2 0.4L123.2 9.700000000000001" stroke="#afc0e0" stroke-width="0.7" fill="none"/><path d="M123.1 9.8l2-2.5v2.5z" fill="#9db3da"/><path d="M160.4 0.4L152.4 9.700000000000001" stroke="#afc0e0" stroke-width="0.7" fill="none"/><path d="M152.3 9.8l2-2.5v2.5z" fill="#9db3da"/><path d="M185.4 0.4L177.4 9.700000000000001" stroke="#afc0e0" stroke-width="0.7" fill="none"/><path d="M177.3 9.8l2-2.5v2.5z" fill="#9db3da"/><path d="M214.5 0.4L206.5 9.700000000000001" stroke="#afc0e0" stroke-width="0.7" fill="none"/><path d="M206.4 9.8l2-2.5v2.5z" fill="#9db3da"/><path d="M252.9 0.4L244.9 9.700000000000001" stroke="#afc0e0" stroke-width="0.7" fill="none"/><path d="M244.8 9.8l2-2.5v2.5z" fill="#9db3da"/><path d="M307.0 0.4L299.0 9.700000000000001" stroke="#afc0e0" stroke-width="0.7" fill="none"/><path d="M298.9 9.8l2-2.5v2.5z" fill="#9db3da"/><path d="M334.9 0.4L326.9 9.700000000000001" stroke="#afc0e0" stroke-width="0.7" fill="none"/><path d="M326.8 9.8l2-2.5v2.5z" fill="#9db3da"/><path d="M366.0 0.4L358.0 9.700000000000001" stroke="#afc0e0" stroke-width="0.7" fill="none"/><path d="M357.9 9.8l2-2.5v2.5z" fill="#9db3da"/><path d="M399.2 0.4L391.2 9.700000000000001" stroke="#afc0e0" stroke-width="0.7" fill="none"/><path d="M391.1 9.8l2-2.5v2.5z" fill="#9db3da"/><path d="M448.1 0.4L440.1 9.700000000000001" stroke="#afc0e0" stroke-width="0.7" fill="none"/><path d="M440.0 9.8l2-2.5v2.5z" fill="#9db3da"/></svg>
<div class="t" style="left:45.30px;top:389.10px;font-size:6.6px;color:#1a2a55;font-family:'Liberation Sans',sans-serif;font-weight:bold;transform:scaleX(0.9932);">Histogrammes</div>
<div class="t" style="left:100.80px;top:389.10px;font-size:6.6px;color:#324a80;font-family:'Liberation Sans',sans-serif;transform:scaleX(0.8959);">Barres</div>
<div class="t" style="left:130.00px;top:389.10px;font-size:6.6px;color:#324a80;font-family:'Liberation Sans',sans-serif;transform:scaleX(0.9260);">Lignes</div>
<div class="t" style="left:159.20px;top:389.10px;font-size:6.6px;color:#324a80;font-family:'Liberation Sans',sans-serif;transform:scaleX(0.8782);">Aires</div>
<div class="t" style="left:184.20px;top:389.10px;font-size:6.6px;color:#324a80;font-family:'Liberation Sans',sans-serif;transform:scaleX(0.9572);">Tartes</div>
<div class="t" style="left:213.30px;top:389.10px;font-size:6.6px;color:#324a80;font-family:'Liberation Sans',sans-serif;transform:scaleX(0.9412);">Anneaux</div>
<div class="t" style="left:251.70px;top:389.10px;font-size:6.6px;color:#324a80;font-family:'Liberation Sans',sans-serif;transform:scaleX(0.9560);">Nuages points</div>
<div class="t" style="left:305.80px;top:389.10px;font-size:6.6px;color:#324a80;font-family:'Liberation Sans',sans-serif;transform:scaleX(0.9016);">Bulles</div>
<div class="t" style="left:333.70px;top:389.10px;font-size:6.6px;color:#324a80;font-family:'Liberation Sans',sans-serif;transform:scaleX(0.9648);">Stocks</div>
<div class="t" style="left:364.80px;top:389.10px;font-size:6.6px;color:#324a80;font-family:'Liberation Sans',sans-serif;transform:scaleX(0.9358);">Radars</div>
<div class="t" style="left:398.00px;top:389.10px;font-size:6.6px;color:#324a80;font-family:'Liberation Sans',sans-serif;transform:scaleX(0.9096);">Thermomètre</div>
<div class="t" style="left:446.90px;top:389.10px;font-size:6.6px;color:#2d4478;font-family:'Liberation Sans',sans-serif;transform:scaleX(0.9347);">Ex</div>
<div class="a" style="left:569.3px;top:386.7px;width:460.70000000000005px;height:9.9px;background:linear-gradient(#e4edfb,#cfdff7);"></div>
<div class="a" style="left:569.3px;top:386.3px;width:460.70000000000005px;height:0.9px;background:#a9bfe2;"></div>
<div class="a" style="left:569.3px;top:396.2px;width:460.70000000000005px;height:0.9px;background:#9db5dc;"></div>
<div class="a" style="left:569.3px;top:387.2px;width:41.6px;height:9.0px;background:linear-gradient(#e9f0fb,#d3e1f7);border-right:1px solid #9db5dc"></div>
<svg style="left:569.3px;top:386.7px" width="42" height="9.9" viewBox="0 0 42 9.9"><path d="M3.6 3v4.4" stroke="#9c9fa8" stroke-width="0.8"/><path d="M7 3v4.4L4.4 5.2z" fill="#9c9fa8"/><path d="M17.2 3v4.4L14.6 5.2z" fill="#9c9fa8"/><path d="M24.6 3v4.4l2.6-2.2z" fill="#2a3f72"/><path d="M35.2 3v4.4l2.6-2.2z" fill="#2a3f72"/><path d="M38.6 3v4.4" stroke="#2a3f72" stroke-width="0.8"/></svg>
<svg style="left:569.3px;top:386.7px" width="460.7" height="9.9" viewBox="0 0 460.7 9.9"><path d="M41.8 0.2H102L94 9.9H41.8z" fill="#fff"/><path d="M102.0 0.4L94.0 9.700000000000001" stroke="#afc0e0" stroke-width="0.7" fill="none"/><path d="M93.9 9.8l2-2.5v2.5z" fill="#9db3da"/><path d="M131.2 0.4L123.2 9.700000000000001" stroke="#afc0e0" stroke-width="0.7" fill="none"/><path d="M123.1 9.8l2-2.5v2.5z" fill="#9db3da"/><path d="M160.4 0.4L152.4 9.700000000000001" stroke="#afc0e0" stroke-width="0.7" fill="none"/><path d="M152.3 9.8l2-2.5v2.5z" fill="#9db3da"/><path d="M185.4 0.4L177.4 9.700000000000001" stroke="#afc0e0" stroke-width="0.7" fill="none"/><path d="M177.3 9.8l2-2.5v2.5z" fill="#9db3da"/><path d="M214.5 0.4L206.5 9.700000000000001" stroke="#afc0e0" stroke-width="0.7" fill="none"/><path d="M206.4 9.8l2-2.5v2.5z" fill="#9db3da"/><path d="M252.9 0.4L244.9 9.700000000000001" stroke="#afc0e0" stroke-width="0.7" fill="none"/><path d="M244.8 9.8l2-2.5v2.5z" fill="#9db3da"/><path d="M307.0 0.4L299.0 9.700000000000001" stroke="#afc0e0" stroke-width="0.7" fill="none"/><path d="M298.9 9.8l2-2.5v2.5z" fill="#9db3da"/><path d="M334.9 0.4L326.9 9.700000000000001" stroke="#afc0e0" stroke-width="0.7" fill="none"/><path d="M326.8 9.8l2-2.5v2.5z" fill="#9db3da"/><path d="M366.0 0.4L358.0 9.700000000000001" stroke="#afc0e0" stroke-width="0.7" fill="none"/><path d="M357.9 9.8l2-2.5v2.5z" fill="#9db3da"/><path d="M399.2 0.4L391.2 9.700000000000001" stroke="#afc0e0" stroke-width="0.7" fill="none"/><path d="M391.1 9.8l2-2.5v2.5z" fill="#9db3da"/><path d="M448.1 0.4L440.1 9.700000000000001" stroke="#afc0e0" stroke-width="0.7" fill="none"/><path d="M440.0 9.8l2-2.5v2.5z" fill="#9db3da"/></svg>
<div class="t" style="left:614.60px;top:389.10px;font-size:6.6px;color:#1a2a55;font-family:'Liberation Sans',sans-serif;font-weight:bold;transform:scaleX(0.9932);">Histogrammes</div>
<div class="t" style="left:670.10px;top:389.10px;font-size:6.6px;color:#324a80;font-family:'Liberation Sans',sans-serif;transform:scaleX(0.8959);">Barres</div>
<div class="t" style="left:699.30px;top:389.10px;font-size:6.6px;color:#324a80;font-family:'Liberation Sans',sans-serif;transform:scaleX(0.9260);">Lignes</div>
<div class="t" style="left:728.50px;top:389.10px;font-size:6.6px;color:#324a80;font-family:'Liberation Sans',sans-serif;transform:scaleX(0.8782);">Aires</div>
<div class="t" style="left:753.50px;top:389.10px;font-size:6.6px;color:#324a80;font-family:'Liberation Sans',sans-serif;transform:scaleX(0.9572);">Tartes</div>
<div class="t" style="left:782.60px;top:389.10px;font-size:6.6px;color:#324a80;font-family:'Liberation Sans',sans-serif;transform:scaleX(0.9412);">Anneaux</div>
<div class="t" style="left:821.00px;top:389.10px;font-size:6.6px;color:#324a80;font-family:'Liberation Sans',sans-serif;transform:scaleX(0.9560);">Nuages points</div>
<div class="t" style="left:875.10px;top:389.10px;font-size:6.6px;color:#324a80;font-family:'Liberation Sans',sans-serif;transform:scaleX(0.9016);">Bulles</div>
<div class="t" style="left:903.00px;top:389.10px;font-size:6.6px;color:#324a80;font-family:'Liberation Sans',sans-serif;transform:scaleX(0.9648);">Stocks</div>
<div class="t" style="left:934.10px;top:389.10px;font-size:6.6px;color:#324a80;font-family:'Liberation Sans',sans-serif;transform:scaleX(0.9358);">Radars</div>
<div class="t" style="left:967.30px;top:389.10px;font-size:6.6px;color:#324a80;font-family:'Liberation Sans',sans-serif;transform:scaleX(0.9096);">Thermomètre</div>
<div class="t" style="left:1016.20px;top:389.10px;font-size:6.6px;color:#2d4478;font-family:'Liberation Sans',sans-serif;transform:scaleX(0.9757);">Ex.</div>
<div class="a" style="left:454.0px;top:386.2px;width:3.6px;height:10.4px;background:#c5d6f1;"></div>
<div class="a" style="left:457.6px;top:386.2px;width:98.60000000000002px;height:10.4px;background:linear-gradient(#e4e8ef,#cfd6e4);border-top:1px solid #97a6c6;border-bottom:1px solid #97a6c6"></div>
<div class="a" style="left:457.6px;top:386.2px;width:9.6px;height:10.4px;background:linear-gradient(#f1f4f9,#dde3ee);border:1px solid #97a6c6;border-radius:1.5px"></div>
<svg style="left:460.80px;top:388.80px" width="2.8" height="5.2" viewBox="0 0 2.8 5.2"><path d="M2.8 0v5.2L0 2.6z" fill="#4a5a7a"/></svg>
<div class="a" style="left:546.6px;top:386.2px;width:9.6px;height:10.4px;background:linear-gradient(#f1f4f9,#dde3ee);border:1px solid #97a6c6;border-radius:1.5px"></div>
<svg style="left:550.20px;top:388.80px" width="2.8" height="5.2" viewBox="0 0 2.8 5.2"><path d="M0 0v5.2L2.8 2.6z" fill="#4a5a7a"/></svg>
<div class="a" style="left:467.20000000000005px;top:386.2px;width:79.40000000000002px;height:10.4px;background:linear-gradient(#e6eaf1,#ccd4e3);border:1px solid #97a6c6;border-radius:1.5px"></div>
<div class="a" style="left:504.70000000000005px;top:389.2px;width:4.4px;height:4.4px;background:#aeb0b4;"></div>
<div class="a" style="left:1028.2px;top:386.2px;width:3.6px;height:10.4px;background:#c5d6f1;"></div>
<div class="a" style="left:1031.8px;top:386.2px;width:99.0px;height:10.4px;background:linear-gradient(#e4e8ef,#cfd6e4);border-top:1px solid #97a6c6;border-bottom:1px solid #97a6c6"></div>
<div class="a" style="left:1031.8px;top:386.2px;width:9.6px;height:10.4px;background:linear-gradient(#f1f4f9,#dde3ee);border:1px solid #97a6c6;border-radius:1.5px"></div>
<svg style="left:1035.00px;top:388.80px" width="2.8" height="5.2" viewBox="0 0 2.8 5.2"><path d="M2.8 0v5.2L0 2.6z" fill="#4a5a7a"/></svg>
<div class="a" style="left:1121.2px;top:386.2px;width:9.6px;height:10.4px;background:linear-gradient(#f1f4f9,#dde3ee);border:1px solid #97a6c6;border-radius:1.5px"></div>
<svg style="left:1124.80px;top:388.80px" width="2.8" height="5.2" viewBox="0 0 2.8 5.2"><path d="M0 0v5.2L2.8 2.6z" fill="#4a5a7a"/></svg>
<div class="a" style="left:1041.3999999999999px;top:386.2px;width:79.8px;height:10.4px;background:linear-gradient(#e6eaf1,#ccd4e3);border:1px solid #97a6c6;border-radius:1.5px"></div>
<div class="a" style="left:1079.1px;top:389.2px;width:4.4px;height:4.4px;background:#aeb0b4;"></div>
<div class="a" style="left:556.2px;top:386.2px;width:10.6px;height:10.4px;background:#7da0d6;"></div>
<div class="a" style="left:1130.8px;top:386.2px;width:10px;height:10.4px;background:#7da0d6;"></div>
<div class="a" style="left:0px;top:396.8px;width:1140px;height:0.8px;background:#c9d3e4;"></div>
<div class="a" style="left:0px;top:399.4px;width:231.7px;height:206.3px;background:#fff;border:1.1px solid #5a5a5a"></div>
<div class="a" style="left:115.2px;top:400.5px;width:105.6px;height:204.3px;background:#ababab;"></div>
<div class="t" style="left:8.00px;top:405.08px;font-size:6.55px;color:#000;font-family:'Liberation Sans',sans-serif;transform:scaleX(0.9416);">Enable</div>
<div class="t" style="left:34.60px;top:405.08px;font-size:6.55px;color:#000;font-family:'Liberation Sans',sans-serif;transform:scaleX(0.9535);">Option</div>
<div class="a" style="left:3.4px;top:400.6px;width:0.8px;height:204px;background:#c8c8c8;"></div>
<div class="a" style="left:30.2px;top:400.6px;width:0.8px;height:204px;background:#c4c4c4;"></div>
<div class="a" style="left:3.4px;top:413.2px;width:111.8px;height:0.8px;background:#b4b4b4;"></div>
<div class="a" style="left:4.0px;top:414.15000000000003px;width:26.4px;height:12.5px;background:#3399ff;"></div>
<div class="a" style="left:3.4px;top:426.55000000000007px;width:27px;height:0.8px;background:#c4c4c4;"></div>
<div class="a" style="left:30.8px;top:426.55000000000007px;width:84.4px;height:0.8px;background:#c4c4c4;"></div>
<svg style="left:13.05px;top:416.45px;" width="7.8" height="7.80" viewBox="0 0 7.8 7.80"><rect x="0.4" y="0.4" width="7" height="7" fill="#fff" stroke="#5a5a5a" stroke-width="0.85"/></svg>
<div class="t" style="left:32.80px;top:418.23px;font-size:6.55px;color:#000;font-family:'Liberation Sans',sans-serif;transform:scaleX(0.9466);">Select All</div>
<div class="a" style="left:30.8px;top:426.95000000000005px;width:84.4px;height:13.5px;background:#008000;"></div>
<div class="a" style="left:3.4px;top:439.6500000000001px;width:27px;height:0.8px;background:#c4c4c4;"></div>
<svg style="left:13.05px;top:429.55px;" width="7.8" height="7.80" viewBox="0 0 7.8 7.80"><rect x="0.4" y="0.4" width="7" height="7" fill="#fff" stroke="#5a5a5a" stroke-width="0.85"/><path d="M1.8 4.9l1.6 0.9 3.6-3.8" stroke="#555" stroke-width="1.0" fill="none"/></svg>
<div class="t" style="left:32.80px;top:431.33px;font-size:6.55px;color:#fff;font-family:'Liberation Sans',sans-serif;transform:scaleX(0.9485);">Entered Values</div>
<div class="a" style="left:30.8px;top:440.05px;width:84.4px;height:13.5px;background:#20b2aa;"></div>
<div class="a" style="left:3.4px;top:452.75000000000006px;width:27px;height:0.8px;background:#c4c4c4;"></div>
<svg style="left:13.05px;top:442.65px;" width="7.8" height="7.80" viewBox="0 0 7.8 7.80"><rect x="0.4" y="0.4" width="7" height="7" fill="#fff" stroke="#5a5a5a" stroke-width="0.85"/><path d="M1.8 4.9l1.6 0.9 3.6-3.8" stroke="#555" stroke-width="1.0" fill="none"/></svg>
<div class="t" style="left:32.80px;top:444.43px;font-size:6.55px;color:#fff;font-family:'Liberation Sans',sans-serif;transform:scaleX(0.9561);">Calculated Values</div>
<div class="a" style="left:30.8px;top:453.15000000000003px;width:84.4px;height:13.5px;background:#6a5acd;"></div>
<div class="a" style="left:3.4px;top:465.8500000000001px;width:27px;height:0.8px;background:#c4c4c4;"></div>
<svg style="left:13.05px;top:455.75px;" width="7.8" height="7.80" viewBox="0 0 7.8 7.80"><rect x="0.4" y="0.4" width="7" height="7" fill="#fff" stroke="#5a5a5a" stroke-width="0.85"/><path d="M1.8 4.9l1.6 0.9 3.6-3.8" stroke="#555" stroke-width="1.0" fill="none"/></svg>
<div class="t" style="left:32.80px;top:457.53px;font-size:6.55px;color:#fff;font-family:'Liberation Sans',sans-serif;transform:scaleX(0.8975);">Formulas</div>
<div class="a" style="left:30.8px;top:466.25px;width:84.4px;height:13.5px;background:#4169e1;"></div>
<div class="a" style="left:3.4px;top:478.95000000000005px;width:27px;height:0.8px;background:#c4c4c4;"></div>
<svg style="left:13.05px;top:468.85px;" width="7.8" height="7.80" viewBox="0 0 7.8 7.80"><rect x="0.4" y="0.4" width="7" height="7" fill="#fff" stroke="#5a5a5a" stroke-width="0.85"/></svg>
<div class="t" style="left:32.80px;top:470.63px;font-size:6.55px;color:#fff;font-family:'Liberation Sans',sans-serif;transform:scaleX(0.9255);">SysGen Formulas</div>
<div class="a" style="left:30.8px;top:479.35px;width:84.4px;height:13.5px;background:#87ceeb;"></div>
<div class="a" style="left:3.4px;top:492.05000000000007px;width:27px;height:0.8px;background:#c4c4c4;"></div>
<svg style="left:13.05px;top:481.95px;" width="7.8" height="7.80" viewBox="0 0 7.8 7.80"><rect x="0.4" y="0.4" width="7" height="7" fill="#fff" stroke="#5a5a5a" stroke-width="0.85"/></svg>
<div class="t" style="left:32.80px;top:483.73px;font-size:6.55px;color:#000;font-family:'Liberation Sans',sans-serif;transform:scaleX(0.9161);">SysGen Formulas Errors</div>
<div class="a" style="left:30.8px;top:492.45000000000005px;width:84.4px;height:13.5px;background:#ff0000;"></div>
<div class="a" style="left:3.4px;top:505.1500000000001px;width:27px;height:0.8px;background:#c4c4c4;"></div>
<svg style="left:13.05px;top:495.05px;" width="7.8" height="7.80" viewBox="0 0 7.8 7.80"><rect x="0.4" y="0.4" width="7" height="7" fill="#fff" stroke="#5a5a5a" stroke-width="0.85"/><path d="M1.8 4.9l1.6 0.9 3.6-3.8" stroke="#555" stroke-width="1.0" fill="none"/></svg>
<div class="t" style="left:32.80px;top:496.83px;font-size:6.55px;color:#2a0000;font-family:'Liberation Sans',sans-serif;transform:scaleX(0.9454);">Structural</div>
<div class="a" style="left:30.8px;top:505.55px;width:84.4px;height:13.5px;background:#bdb76b;"></div>
<div class="a" style="left:3.4px;top:518.25px;width:27px;height:0.8px;background:#c4c4c4;"></div>
<svg style="left:13.05px;top:508.15px;" width="7.8" height="7.80" viewBox="0 0 7.8 7.80"><rect x="0.4" y="0.4" width="7" height="7" fill="#fff" stroke="#5a5a5a" stroke-width="0.85"/><path d="M1.8 4.9l1.6 0.9 3.6-3.8" stroke="#555" stroke-width="1.0" fill="none"/></svg>
<div class="t" style="left:32.80px;top:509.93px;font-size:6.55px;color:#000;font-family:'Liberation Sans',sans-serif;transform:scaleX(0.9157);">Names</div>
<div class="a" style="left:30.8px;top:518.65px;width:84.4px;height:13.5px;background:#fa8072;"></div>
<div class="a" style="left:3.4px;top:531.35px;width:27px;height:0.8px;background:#c4c4c4;"></div>
<svg style="left:13.05px;top:521.25px;" width="7.8" height="7.80" viewBox="0 0 7.8 7.80"><rect x="0.4" y="0.4" width="7" height="7" fill="#fff" stroke="#5a5a5a" stroke-width="0.85"/></svg>
<div class="t" style="left:32.80px;top:523.02px;font-size:6.55px;color:#000;font-family:'Liberation Sans',sans-serif;transform:scaleX(0.9376);">SysGen Names</div>
<div class="a" style="left:30.8px;top:531.75px;width:84.4px;height:13.5px;background:#ff8c00;"></div>
<div class="a" style="left:3.4px;top:544.45px;width:27px;height:0.8px;background:#c4c4c4;"></div>
<svg style="left:13.05px;top:534.35px;" width="7.8" height="7.80" viewBox="0 0 7.8 7.80"><rect x="0.4" y="0.4" width="7" height="7" fill="#fff" stroke="#5a5a5a" stroke-width="0.85"/></svg>
<div class="t" style="left:32.80px;top:536.12px;font-size:6.55px;color:#000;font-family:'Liberation Sans',sans-serif;transform:scaleX(0.9322);">SysGen Names Error</div>
<div class="a" style="left:30.8px;top:544.85px;width:84.4px;height:13.5px;background:#800080;"></div>
<div class="a" style="left:3.4px;top:557.5500000000001px;width:27px;height:0.8px;background:#c4c4c4;"></div>
<svg style="left:13.05px;top:547.45px;" width="7.8" height="7.80" viewBox="0 0 7.8 7.80"><rect x="0.4" y="0.4" width="7" height="7" fill="#fff" stroke="#5a5a5a" stroke-width="0.85"/><path d="M1.8 4.9l1.6 0.9 3.6-3.8" stroke="#555" stroke-width="1.0" fill="none"/></svg>
<div class="t" style="left:32.80px;top:549.22px;font-size:6.55px;color:#fff;font-family:'Liberation Sans',sans-serif;transform:scaleX(0.9549);">Macros</div>
<div class="a" style="left:30.8px;top:557.95px;width:84.4px;height:13.5px;background:#a52a2a;"></div>
<div class="a" style="left:3.4px;top:570.6500000000001px;width:27px;height:0.8px;background:#c4c4c4;"></div>
<svg style="left:13.05px;top:560.55px;" width="7.8" height="7.80" viewBox="0 0 7.8 7.80"><rect x="0.4" y="0.4" width="7" height="7" fill="#fff" stroke="#5a5a5a" stroke-width="0.85"/><path d="M1.8 4.9l1.6 0.9 3.6-3.8" stroke="#555" stroke-width="1.0" fill="none"/></svg>
<div class="t" style="left:32.80px;top:562.32px;font-size:6.55px;color:#fff;font-family:'Liberation Sans',sans-serif;transform:scaleX(0.9635);">Data Connection</div>
<div class="a" style="left:30.8px;top:571.05px;width:84.4px;height:13.5px;background:#006400;"></div>
<div class="a" style="left:3.4px;top:583.75px;width:27px;height:0.8px;background:#c4c4c4;"></div>
<svg style="left:13.05px;top:573.65px;" width="7.8" height="7.80" viewBox="0 0 7.8 7.80"><rect x="0.4" y="0.4" width="7" height="7" fill="#fff" stroke="#5a5a5a" stroke-width="0.85"/><path d="M1.8 4.9l1.6 0.9 3.6-3.8" stroke="#555" stroke-width="1.0" fill="none"/></svg>
<div class="t" style="left:32.80px;top:575.42px;font-size:6.55px;color:#fff;font-family:'Liberation Sans',sans-serif;transform:scaleX(0.9012);">Cell Format</div>
<div class="a" style="left:30.8px;top:584.15px;width:84.4px;height:13.5px;background:#cd5c5c;"></div>
<div class="a" style="left:3.4px;top:596.85px;width:27px;height:0.8px;background:#c4c4c4;"></div>
<svg style="left:13.05px;top:586.75px;" width="7.8" height="7.80" viewBox="0 0 7.8 7.80"><rect x="0.4" y="0.4" width="7" height="7" fill="#fff" stroke="#5a5a5a" stroke-width="0.85"/><path d="M1.8 4.9l1.6 0.9 3.6-3.8" stroke="#555" stroke-width="1.0" fill="none"/></svg>
<div class="t" style="left:32.80px;top:588.52px;font-size:6.55px;color:#fff;font-family:'Liberation Sans',sans-serif;transform:scaleX(0.9394);">Cell Protection</div>
<div class="a" style="left:30.8px;top:597.25px;width:84.4px;height:7.649999999999977px;background:#808080;"></div>
<svg style="left:13.05px;top:599.85px;overflow:hidden" width="7.8" height="5.05" viewBox="0 0 7.8 5.05"><rect x="0.4" y="0.4" width="7" height="7" fill="#fff" stroke="#5a5a5a" stroke-width="0.85"/><path d="M1.8 4.9l1.6 0.9 3.6-3.8" stroke="#555" stroke-width="1.0" fill="none"/></svg>
<div class="t" style="left:32.80px;top:601.62px;font-size:6.55px;color:#d8d8d8;font-family:'Liberation Sans',sans-serif;transform:scaleX(0.9613);clip-path:inset(0 0 2.75px 0);">Sheet/Workbook Protection</div>
<div class="a" style="left:220.8px;top:400.5px;width:9.8px;height:204.29999999999995px;background:#f0f0f0;"></div>
<div class="a" style="left:220.8px;top:410.8px;width:9.8px;height:177.90000000000003px;background:#cdcdcd;"></div>
<svg style="left:223.20px;top:404.80px" width="4.6" height="2.9" viewBox="0 0 4.6 2.9"><path d="M0.3 2.7L2.3 0.6l2 2.1" stroke="#404040" stroke-width="1.05" fill="none"/></svg>
<svg style="left:223.20px;top:598.20px" width="4.6" height="2.9" viewBox="0 0 4.6 2.9"><path d="M0.3 0.3L2.3 2.4l2-2.1" stroke="#404040" stroke-width="1.05" fill="none"/></svg>
<div class="a" style="left:233.4px;top:399.2px;width:570.4px;height:206.2px;background:#fff;border:1px solid #b9b9b9;border-top:1.4px solid #cbcbcb"></div>
<div class="a" style="left:793.2px;top:400.4px;width:8.9px;height:204.5px;background:#f0f0f0;"></div>
<div class="a" style="left:793.2px;top:411.0px;width:8.9px;height:149.60000000000002px;background:#cdcdcd;"></div>
<svg style="left:795.15px;top:404.70px" width="4.6" height="2.9" viewBox="0 0 4.6 2.9"><path d="M0.3 2.7L2.3 0.6l2 2.1" stroke="#404040" stroke-width="1.05" fill="none"/></svg>
<svg style="left:795.15px;top:598.30px" width="4.6" height="2.9" viewBox="0 0 4.6 2.9"><path d="M0.3 0.3L2.3 2.4l2-2.1" stroke="#404040" stroke-width="1.05" fill="none"/></svg>
<div class="t" style="left:238.80px;top:405.58px;font-size:6.55px;color:#000;font-family:'Liberation Sans',sans-serif;transform:scaleX(0.9585);">Sheet</div>
<div class="t" style="left:302.20px;top:405.58px;font-size:6.55px;color:#000;font-family:'Liberation Sans',sans-serif;transform:scaleX(0.9042);">Cell</div>
<div class="t" style="left:338.30px;top:405.58px;font-size:6.55px;color:#000;font-family:'Liberation Sans',sans-serif;transform:scaleX(0.9669);">Value 1</div>
<div class="t" style="left:394.30px;top:405.58px;font-size:6.55px;color:#000;font-family:'Liberation Sans',sans-serif;transform:scaleX(0.9669);">Value 2</div>
<div class="t" style="left:450.90px;top:405.58px;font-size:6.55px;color:#000;font-family:'Liberation Sans',sans-serif;transform:scaleX(0.9826);">Change Description</div>
<div class="a" style="left:298.40000000000003px;top:400.4px;width:0.8px;height:15px;background:#e5e5e5;"></div>
<div class="a" style="left:298.40000000000003px;top:415.4px;width:0.8px;height:189px;background:#f7f7f7;"></div>
<div class="a" style="left:333.90000000000003px;top:400.4px;width:0.8px;height:15px;background:#e5e5e5;"></div>
<div class="a" style="left:333.90000000000003px;top:415.4px;width:0.8px;height:189px;background:#f7f7f7;"></div>
<div class="a" style="left:390.5px;top:400.4px;width:0.8px;height:15px;background:#e5e5e5;"></div>
<div class="a" style="left:390.5px;top:415.4px;width:0.8px;height:189px;background:#f7f7f7;"></div>
<div class="a" style="left:447.1px;top:400.4px;width:0.8px;height:15px;background:#e5e5e5;"></div>
<div class="a" style="left:447.1px;top:415.4px;width:0.8px;height:189px;background:#f7f7f7;"></div>
<div class="a" style="left:595.4px;top:400.4px;width:0.8px;height:15px;background:#e5e5e5;"></div>
<div class="a" style="left:595.4px;top:415.4px;width:0.8px;height:189px;background:#f7f7f7;"></div>
<div class="t" style="left:238.80px;top:417.88px;font-size:6.55px;color:#f40808;font-family:'Liberation Sans',sans-serif;transform:scaleX(0.9550);">Compléments</div>
<div class="t" style="left:450.90px;top:417.88px;font-size:6.55px;color:#f40808;font-family:'Liberation Sans',sans-serif;transform:scaleX(0.9550);">Added Sheet At Position 28.</div>
<div class="a" style="left:234.6px;top:425.34499999999997px;width:558.6px;height:0.7px;background:#f4f4f4;"></div>
<div class="t" style="left:238.80px;top:427.97px;font-size:6.55px;color:#f40808;font-family:'Liberation Sans',sans-serif;transform:scaleX(0.9550);">OBLIGATIONS FO...</div>
<div class="t" style="left:450.90px;top:427.97px;font-size:6.55px;color:#f40808;font-family:'Liberation Sans',sans-serif;transform:scaleX(0.9550);">Added Sheet At Position 29.</div>
<div class="a" style="left:234.6px;top:435.435px;width:558.6px;height:0.7px;background:#f4f4f4;"></div>
<div class="t" style="left:238.80px;top:438.06px;font-size:6.55px;color:#f40808;font-family:'Liberation Sans',sans-serif;transform:scaleX(0.9550);">Deux axes</div>
<div class="t" style="left:450.90px;top:438.06px;font-size:6.55px;color:#f40808;font-family:'Liberation Sans',sans-serif;transform:scaleX(0.9550);">Moved Sheet From Position 19 To Position 17.</div>
<div class="a" style="left:234.6px;top:445.525px;width:558.6px;height:0.7px;background:#f4f4f4;"></div>
<div class="t" style="left:238.80px;top:448.15px;font-size:6.55px;color:#f40808;font-family:'Liberation Sans',sans-serif;transform:scaleX(0.9550);">Deux styles</div>
<div class="t" style="left:450.90px;top:448.15px;font-size:6.55px;color:#f40808;font-family:'Liberation Sans',sans-serif;transform:scaleX(0.9550);">Moved Sheet From Position 17 To Position 19.</div>
<div class="a" style="left:234.6px;top:455.615px;width:558.6px;height:0.7px;background:#f4f4f4;"></div>
<div class="t" style="left:238.80px;top:458.24px;font-size:6.55px;color:#0f820f;font-family:'Liberation Sans',sans-serif;transform:scaleX(0.9550);">Thermomètre</div>
<div class="t" style="left:302.20px;top:458.24px;font-size:6.55px;color:#0f820f;font-family:'Liberation Sans',sans-serif;transform:scaleX(0.9550);">B12</div>
<div class="t" style="left:338.30px;top:458.24px;font-size:6.55px;color:#0f820f;font-family:'Liberation Sans',sans-serif;transform:scaleX(0.9550);">2ème étape: In...</div>
<div class="t" style="left:394.30px;top:458.24px;font-size:6.55px;color:#0f820f;font-family:'Liberation Sans',sans-serif;transform:scaleX(0.9550);">2ème étape: In...</div>
<div class="t" style="left:450.90px;top:458.24px;font-size:6.55px;color:#0f820f;font-family:'Liberation Sans',sans-serif;transform:scaleX(0.9550);">Entered Value Changed.</div>
<div class="a" style="left:234.6px;top:465.705px;width:558.6px;height:0.7px;background:#f4f4f4;"></div>
<div class="t" style="left:238.80px;top:468.33px;font-size:6.55px;color:#0f820f;font-family:'Liberation Sans',sans-serif;transform:scaleX(0.9550);">Thermomètre</div>
<div class="t" style="left:302.20px;top:468.33px;font-size:6.55px;color:#0f820f;font-family:'Liberation Sans',sans-serif;transform:scaleX(0.9550);">B49</div>
<div class="t" style="left:338.30px;top:468.33px;font-size:6.55px;color:#0f820f;font-family:'Liberation Sans',sans-serif;transform:scaleX(0.9550);">4ème étape: Jo...</div>
<div class="t" style="left:394.30px;top:468.33px;font-size:6.55px;color:#0f820f;font-family:'Liberation Sans',sans-serif;transform:scaleX(0.9550);">4ème étape: Jo...</div>
<div class="t" style="left:450.90px;top:468.33px;font-size:6.55px;color:#0f820f;font-family:'Liberation Sans',sans-serif;transform:scaleX(0.9550);">Entered Value Changed.</div>
<div class="a" style="left:234.6px;top:475.795px;width:558.6px;height:0.7px;background:#f4f4f4;"></div>
<div class="t" style="left:238.80px;top:478.42px;font-size:6.55px;color:#0f820f;font-family:'Liberation Sans',sans-serif;transform:scaleX(0.9550);">Thermomètre</div>
<div class="t" style="left:302.20px;top:478.42px;font-size:6.55px;color:#0f820f;font-family:'Liberation Sans',sans-serif;transform:scaleX(0.9550);">B66</div>
<div class="t" style="left:338.30px;top:478.42px;font-size:6.55px;color:#0f820f;font-family:'Liberation Sans',sans-serif;transform:scaleX(0.9550);">5ème étape: Jo...</div>
<div class="t" style="left:394.30px;top:478.42px;font-size:6.55px;color:#0f820f;font-family:'Liberation Sans',sans-serif;transform:scaleX(0.9550);">5ème étape: Aj...</div>
<div class="t" style="left:450.90px;top:478.42px;font-size:6.55px;color:#0f820f;font-family:'Liberation Sans',sans-serif;transform:scaleX(0.9550);">Entered Value Changed.</div>
<div class="a" style="left:234.6px;top:485.885px;width:558.6px;height:0.7px;background:#f4f4f4;"></div>
<div class="t" style="left:238.80px;top:488.51px;font-size:6.55px;color:#0f820f;font-family:'Liberation Sans',sans-serif;transform:scaleX(0.9550);">Tachymètre</div>
<div class="t" style="left:302.20px;top:488.51px;font-size:6.55px;color:#0f820f;font-family:'Liberation Sans',sans-serif;transform:scaleX(0.9550);">D8</div>
<div class="t" style="left:338.30px;top:488.51px;font-size:6.55px;color:#0f820f;font-family:'Liberation Sans',sans-serif;transform:scaleX(0.9550);">60</div>
<div class="t" style="left:394.30px;top:488.51px;font-size:6.55px;color:#0f820f;font-family:'Liberation Sans',sans-serif;transform:scaleX(0.9550);">40</div>
<div class="t" style="left:450.90px;top:488.51px;font-size:6.55px;color:#0f820f;font-family:'Liberation Sans',sans-serif;transform:scaleX(0.9550);">Entered Value Changed.</div>
<div class="a" style="left:234.6px;top:495.975px;width:558.6px;height:0.7px;background:#f4f4f4;"></div>
<div class="t" style="left:238.80px;top:498.60px;font-size:6.55px;color:#1fa5a5;font-family:'Liberation Sans',sans-serif;transform:scaleX(0.9550);">Tachymètre</div>
<div class="t" style="left:302.20px;top:498.60px;font-size:6.55px;color:#1fa5a5;font-family:'Liberation Sans',sans-serif;transform:scaleX(0.9550);">D19</div>
<div class="t" style="left:338.30px;top:498.60px;font-size:6.55px;color:#1fa5a5;font-family:'Liberation Sans',sans-serif;transform:scaleX(0.9550);">60</div>
<div class="t" style="left:394.30px;top:498.60px;font-size:6.55px;color:#1fa5a5;font-family:'Liberation Sans',sans-serif;transform:scaleX(0.9550);">40</div>
<div class="t" style="left:450.90px;top:498.60px;font-size:6.55px;color:#1fa5a5;font-family:'Liberation Sans',sans-serif;transform:scaleX(0.9550);">Calculated Value Changed.</div>
<div class="a" style="left:234.6px;top:506.065px;width:558.6px;height:0.7px;background:#f4f4f4;"></div>
<div class="t" style="left:238.80px;top:508.69px;font-size:6.55px;color:#1fa5a5;font-family:'Liberation Sans',sans-serif;transform:scaleX(0.9550);">Tachymètre</div>
<div class="t" style="left:302.20px;top:508.69px;font-size:6.55px;color:#1fa5a5;font-family:'Liberation Sans',sans-serif;transform:scaleX(0.9550);">D21</div>
<div class="t" style="left:338.30px;top:508.69px;font-size:6.55px;color:#1fa5a5;font-family:'Liberation Sans',sans-serif;transform:scaleX(0.9550);">39</div>
<div class="t" style="left:394.30px;top:508.69px;font-size:6.55px;color:#1fa5a5;font-family:'Liberation Sans',sans-serif;transform:scaleX(0.9550);">59</div>
<div class="t" style="left:450.90px;top:508.69px;font-size:6.55px;color:#1fa5a5;font-family:'Liberation Sans',sans-serif;transform:scaleX(0.9550);">Calculated Value Changed.</div>
<div class="a" style="left:234.6px;top:516.1550000000001px;width:558.6px;height:0.7px;background:#f4f4f4;"></div>
<div class="t" style="left:238.80px;top:518.77px;font-size:6.55px;color:#1fa5a5;font-family:'Liberation Sans',sans-serif;transform:scaleX(0.9550);">Tachymètre</div>
<div class="t" style="left:302.20px;top:518.77px;font-size:6.55px;color:#1fa5a5;font-family:'Liberation Sans',sans-serif;transform:scaleX(0.9550);">D25</div>
<div class="t" style="left:338.30px;top:518.77px;font-size:6.55px;color:#1fa5a5;font-family:'Liberation Sans',sans-serif;transform:scaleX(0.9550);">60</div>
<div class="t" style="left:394.30px;top:518.77px;font-size:6.55px;color:#1fa5a5;font-family:'Liberation Sans',sans-serif;transform:scaleX(0.9550);">40</div>
<div class="t" style="left:450.90px;top:518.77px;font-size:6.55px;color:#1fa5a5;font-family:'Liberation Sans',sans-serif;transform:scaleX(0.9550);">Calculated Value Changed.</div>
<div class="a" style="left:234.6px;top:526.2450000000001px;width:558.6px;height:0.7px;background:#f4f4f4;"></div>
<div class="t" style="left:238.80px;top:528.87px;font-size:6.55px;color:#2c7c00;font-family:'Liberation Sans',sans-serif;transform:scaleX(0.9550);">Ex.3</div>
<div class="t" style="left:302.20px;top:528.87px;font-size:6.55px;color:#2c7c00;font-family:'Liberation Sans',sans-serif;transform:scaleX(0.9550);">B5</div>
<div class="t" style="left:338.30px;top:528.87px;font-size:6.55px;color:#2c7c00;font-family:'Liberation Sans',sans-serif;transform:scaleX(0.9550);">Convertir la séri...</div>
<div class="t" style="left:394.30px;top:528.87px;font-size:6.55px;color:#2c7c00;font-family:'Liberation Sans',sans-serif;transform:scaleX(0.9550);">Ajouter un 2èm...</div>
<div class="t" style="left:450.90px;top:528.87px;font-size:6.55px;color:#2c7c00;font-family:'Liberation Sans',sans-serif;transform:scaleX(0.9550);">Entered Value Changed.</div>
<div class="a" style="left:234.6px;top:536.3350000000002px;width:558.6px;height:0.7px;background:#f4f4f4;"></div>
<div class="t" style="left:238.80px;top:538.96px;font-size:6.55px;color:#2c7c00;font-family:'Liberation Sans',sans-serif;transform:scaleX(0.9550);">Ex.4</div>
<div class="t" style="left:302.20px;top:538.96px;font-size:6.55px;color:#2c7c00;font-family:'Liberation Sans',sans-serif;transform:scaleX(0.9550);">B5</div>
<div class="t" style="left:338.30px;top:538.96px;font-size:6.55px;color:#2c7c00;font-family:'Liberation Sans',sans-serif;transform:scaleX(0.9550);">Ajouter un 2èm...</div>
<div class="t" style="left:394.30px;top:538.96px;font-size:6.55px;color:#2c7c00;font-family:'Liberation Sans',sans-serif;transform:scaleX(0.9550);">Convertir la séri...</div>
<div class="t" style="left:450.90px;top:538.96px;font-size:6.55px;color:#2c7c00;font-family:'Liberation Sans',sans-serif;transform:scaleX(0.9550);">Entered Value Changed.</div>
<div class="a" style="left:234.6px;top:546.4250000000001px;width:558.6px;height:0.7px;background:#f4f4f4;"></div>
<div class="t" style="left:238.80px;top:549.04px;font-size:6.55px;color:#2c7c00;font-family:'Liberation Sans',sans-serif;transform:scaleX(0.9550);">Zone de texte</div>
<div class="t" style="left:302.20px;top:549.04px;font-size:6.55px;color:#2c7c00;font-family:'Liberation Sans',sans-serif;transform:scaleX(0.9550);">H6</div>
<div class="t" style="left:338.30px;top:549.04px;font-size:6.55px;color:#2c7c00;font-family:'Liberation Sans',sans-serif;transform:scaleX(0.9550);">Mars</div>
<div class="t" style="left:394.30px;top:549.04px;font-size:6.55px;color:#2c7c00;font-family:'Liberation Sans',sans-serif;transform:scaleX(0.9550);">Février</div>
<div class="t" style="left:450.90px;top:549.04px;font-size:6.55px;color:#2c7c00;font-family:'Liberation Sans',sans-serif;transform:scaleX(0.9550);">Entered Value Changed.</div>
<div class="a" style="left:234.6px;top:556.5150000000001px;width:558.6px;height:0.7px;background:#f4f4f4;"></div>
<div class="t" style="left:238.80px;top:559.13px;font-size:6.55px;color:#1fa5a5;font-family:'Liberation Sans',sans-serif;transform:scaleX(0.9550);">Zone de texte</div>
<div class="t" style="left:302.20px;top:559.13px;font-size:6.55px;color:#1fa5a5;font-family:'Liberation Sans',sans-serif;transform:scaleX(0.9550);">C13</div>
<div class="t" style="left:338.30px;top:559.13px;font-size:6.55px;color:#1fa5a5;font-family:'Liberation Sans',sans-serif;transform:scaleX(0.9550);">Mars</div>
<div class="t" style="left:394.30px;top:559.13px;font-size:6.55px;color:#1fa5a5;font-family:'Liberation Sans',sans-serif;transform:scaleX(0.9550);">Février</div>
<div class="t" style="left:450.90px;top:559.13px;font-size:6.55px;color:#1fa5a5;font-family:'Liberation Sans',sans-serif;transform:scaleX(0.9550);">Calculated Value Changed.</div>
<div class="a" style="left:234.6px;top:566.6050000000001px;width:558.6px;height:0.7px;background:#f4f4f4;"></div>
<div class="t" style="left:238.80px;top:569.23px;font-size:6.55px;color:#1fa5a5;font-family:'Liberation Sans',sans-serif;transform:scaleX(0.9550);">Zone de texte</div>
<div class="t" style="left:302.20px;top:569.23px;font-size:6.55px;color:#1fa5a5;font-family:'Liberation Sans',sans-serif;transform:scaleX(0.9550);">C16</div>
<div class="t" style="left:338.30px;top:569.23px;font-size:6.55px;color:#1fa5a5;font-family:'Liberation Sans',sans-serif;transform:scaleX(0.9550);">20% (0.199999...</div>
<div class="t" style="left:394.30px;top:569.23px;font-size:6.55px;color:#1fa5a5;font-family:'Liberation Sans',sans-serif;transform:scaleX(0.9550);">-31% (-0.30769...</div>
<div class="t" style="left:450.90px;top:569.23px;font-size:6.55px;color:#1fa5a5;font-family:'Liberation Sans',sans-serif;transform:scaleX(0.9550);">Calculated Value Changed.</div>
<div class="a" style="left:234.6px;top:576.695px;width:558.6px;height:0.7px;background:#f4f4f4;"></div>
<div class="t" style="left:238.80px;top:579.31px;font-size:6.55px;color:#1fa5a5;font-family:'Liberation Sans',sans-serif;transform:scaleX(0.9550);">Zone de texte</div>
<div class="t" style="left:302.20px;top:579.31px;font-size:6.55px;color:#1fa5a5;font-family:'Liberation Sans',sans-serif;transform:scaleX(0.9550);">C17</div>
<div class="t" style="left:338.30px;top:579.31px;font-size:6.55px;color:#1fa5a5;font-family:'Liberation Sans',sans-serif;transform:scaleX(0.9550);">d'augmentation...</div>
<div class="t" style="left:394.30px;top:579.31px;font-size:6.55px;color:#1fa5a5;font-family:'Liberation Sans',sans-serif;transform:scaleX(0.9550);">de dimunition e...</div>
<div class="t" style="left:450.90px;top:579.31px;font-size:6.55px;color:#1fa5a5;font-family:'Liberation Sans',sans-serif;transform:scaleX(0.9550);">Calculated Value Changed.</div>
<div class="a" style="left:234.6px;top:586.7850000000001px;width:558.6px;height:0.7px;background:#f4f4f4;"></div>
<div class="t" style="left:238.80px;top:589.40px;font-size:6.55px;color:#1fa5a5;font-family:'Liberation Sans',sans-serif;transform:scaleX(0.9550);">Zone de texte</div>
<div class="t" style="left:302.20px;top:589.40px;font-size:6.55px;color:#1fa5a5;font-family:'Liberation Sans',sans-serif;transform:scaleX(0.9550);">C18</div>
<div class="t" style="left:338.30px;top:589.40px;font-size:6.55px;color:#1fa5a5;font-family:'Liberation Sans',sans-serif;transform:scaleX(0.9550);">Ventes pour le ...</div>
<div class="t" style="left:394.30px;top:589.40px;font-size:6.55px;color:#1fa5a5;font-family:'Liberation Sans',sans-serif;transform:scaleX(0.9550);">Ventes pour le ...</div>
<div class="t" style="left:450.90px;top:589.40px;font-size:6.55px;color:#1fa5a5;font-family:'Liberation Sans',sans-serif;transform:scaleX(0.9550);">Calculated Value Changed.</div>
<div class="a" style="left:234.6px;top:596.8750000000001px;width:558.6px;height:0.7px;background:#f4f4f4;"></div>
<div class="t" style="left:238.80px;top:599.50px;font-size:6.55px;color:#1fa5a5;font-family:'Liberation Sans',sans-serif;transform:scaleX(0.9550);clip-path:inset(0 0 1.62px 0);">Zone de texte</div>
<div class="t" style="left:302.20px;top:599.50px;font-size:6.55px;color:#1fa5a5;font-family:'Liberation Sans',sans-serif;transform:scaleX(0.9550);clip-path:inset(0 0 1.62px 0);">D13</div>
<div class="t" style="left:338.30px;top:599.50px;font-size:6.55px;color:#1fa5a5;font-family:'Liberation Sans',sans-serif;transform:scaleX(0.9550);clip-path:inset(0 0 1.62px 0);">500</div>
<div class="t" style="left:394.30px;top:599.50px;font-size:6.55px;color:#1fa5a5;font-family:'Liberation Sans',sans-serif;transform:scaleX(0.9550);clip-path:inset(0 0 1.62px 0);">325</div>
<div class="t" style="left:450.90px;top:599.50px;font-size:6.55px;color:#1fa5a5;font-family:'Liberation Sans',sans-serif;transform:scaleX(0.9550);clip-path:inset(0 0 1.62px 0);">Calculated Value Changed.</div>
<div class="a" style="left:806.0px;top:399.4px;width:336px;height:206.3px;background:#fff;border:1.1px solid #4e4e4e;border-top-color:#6c6c6c"></div>
<svg style="left:0;top:0" width="1140" height="618" viewBox="0 0 1140 618"><defs><linearGradient id="gg" x1="0" x2="1" y1="0" y2="0"><stop offset="0" stop-color="#8fb85a"/><stop offset="0.45" stop-color="#7aa640"/><stop offset="1" stop-color="#4f7f17"/></linearGradient><linearGradient id="gb" x1="0" x2="1" y1="0" y2="0"><stop offset="0" stop-color="#4f97d2"/><stop offset="0.45" stop-color="#2f7fc3"/><stop offset="1" stop-color="#135fa6"/></linearGradient></defs><path d="M842.3 518.41H1135" stroke="#e9e9e9" stroke-width="0.6"/><path d="M842.3 506.12H1135" stroke="#e9e9e9" stroke-width="0.6"/><path d="M842.3 493.83H1135" stroke="#e9e9e9" stroke-width="0.6"/><path d="M842.3 481.54H1135" stroke="#e9e9e9" stroke-width="0.6"/><path d="M842.3 469.25H1135" stroke="#e9e9e9" stroke-width="0.6"/><path d="M842.3 456.96H1135" stroke="#e9e9e9" stroke-width="0.6"/><path d="M842.3 444.67H1135" stroke="#e9e9e9" stroke-width="0.6"/><path d="M842.3 432.38H1135" stroke="#e9e9e9" stroke-width="0.6"/><path d="M842.3 420.09H1135" stroke="#e9e9e9" stroke-width="0.6"/><path d="M842.3 407.80H1135" stroke="#e9e9e9" stroke-width="0.6"/><rect x="842.30" y="432.38" width="20.92" height="98.32" fill="url(#gg)" stroke="#3f6a12" stroke-width="0.6"/><rect x="863.22" y="407.80" width="20.92" height="122.90" fill="url(#gb)" stroke="#1b4f8a" stroke-width="0.6"/><rect x="946.90" y="481.54" width="20.92" height="49.16" fill="url(#gg)" stroke="#3f6a12" stroke-width="0.6"/><path d="M842.3 407.8H1135V530.7" stroke="#dcdcdc" stroke-width="0.6" fill="none"/><path d="M842.3 407.8V530.7H1135" stroke="#7a7a7a" stroke-width="0.8" fill="none"/><path d="M841.0999999999999 530.70h1.2" stroke="#7a7a7a" stroke-width="0.5"/><text x="839.0999999999999" y="532.75" font-family="DejaVu Sans,sans-serif" font-size="4.8" fill="#666" text-anchor="end">0</text><path d="M841.0999999999999 518.41h1.2" stroke="#7a7a7a" stroke-width="0.5"/><text x="839.0999999999999" y="520.46" font-family="DejaVu Sans,sans-serif" font-size="4.8" fill="#666" text-anchor="end">1</text><path d="M841.0999999999999 506.12h1.2" stroke="#7a7a7a" stroke-width="0.5"/><text x="839.0999999999999" y="508.17" font-family="DejaVu Sans,sans-serif" font-size="4.8" fill="#666" text-anchor="end">2</text><path d="M841.0999999999999 493.83h1.2" stroke="#7a7a7a" stroke-width="0.5"/><text x="839.0999999999999" y="495.88" font-family="DejaVu Sans,sans-serif" font-size="4.8" fill="#666" text-anchor="end">3</text><path d="M841.0999999999999 481.54h1.2" stroke="#7a7a7a" stroke-width="0.5"/><text x="839.0999999999999" y="483.59" font-family="DejaVu Sans,sans-serif" font-size="4.8" fill="#666" text-anchor="end">4</text><path d="M841.0999999999999 469.25h1.2" stroke="#7a7a7a" stroke-width="0.5"/><text x="839.0999999999999" y="471.30" font-family="DejaVu Sans,sans-serif" font-size="4.8" fill="#666" text-anchor="end">5</text><path d="M841.0999999999999 456.96h1.2" stroke="#7a7a7a" stroke-width="0.5"/><text x="839.0999999999999" y="459.01" font-family="DejaVu Sans,sans-serif" font-size="4.8" fill="#666" text-anchor="end">6</text><path d="M841.0999999999999 444.67h1.2" stroke="#7a7a7a" stroke-width="0.5"/><text x="839.0999999999999" y="446.72" font-family="DejaVu Sans,sans-serif" font-size="4.8" fill="#666" text-anchor="end">7</text><path d="M841.0999999999999 432.38h1.2" stroke="#7a7a7a" stroke-width="0.5"/><text x="839.0999999999999" y="434.43" font-family="DejaVu Sans,sans-serif" font-size="4.8" fill="#666" text-anchor="end">8</text><path d="M841.0999999999999 420.09h1.2" stroke="#7a7a7a" stroke-width="0.5"/><text x="839.0999999999999" y="422.14" font-family="DejaVu Sans,sans-serif" font-size="4.8" fill="#666" text-anchor="end">9</text><path d="M841.0999999999999 407.80h1.2" stroke="#7a7a7a" stroke-width="0.5"/><text x="839.0999999999999" y="409.85" font-family="DejaVu Sans,sans-serif" font-size="4.8" fill="#666" text-anchor="end">10</text><text transform="translate(816.4,501.9) rotate(-90)" font-family="DejaVu Sans,sans-serif" font-size="4.6" font-weight="bold" fill="#111" text-anchor="middle" textLength="16.2" lengthAdjust="spacingAndGlyphs">Count</text><clipPath id="cl"><rect x="806" y="531" width="340" height="69.6"/></clipPath><text transform="translate(854.31,532.9) rotate(-90)" font-family="DejaVu Sans,sans-serif" font-size="4.9" fill="#3e3e3e" text-anchor="end" textLength="41.2" lengthAdjust="spacing">Entered Values</text><text transform="translate(875.23,532.9) rotate(-90)" font-family="DejaVu Sans,sans-serif" font-size="4.9" fill="#3e3e3e" text-anchor="end" textLength="47.3" lengthAdjust="spacing">Calculated Values</text><text transform="translate(896.15,532.9) rotate(-90)" font-family="DejaVu Sans,sans-serif" font-size="4.9" fill="#3e3e3e" text-anchor="end" textLength="23.5" lengthAdjust="spacing">Formulas</text><text transform="translate(917.07,532.9) rotate(-90)" font-family="DejaVu Sans,sans-serif" font-size="4.9" fill="#3e3e3e" text-anchor="end" textLength="46.2" lengthAdjust="spacing">SysGen Formulas</text><text transform="translate(937.99,532.9) rotate(-90)" font-family="DejaVu Sans,sans-serif" font-size="4.9" fill="#3e3e3e" text-anchor="end" textLength="66.8" lengthAdjust="spacing">SysGen Formulas (Errors)</text><text transform="translate(958.91,532.9) rotate(-90)" font-family="DejaVu Sans,sans-serif" font-size="4.9" fill="#3e3e3e" text-anchor="end" textLength="28.2" lengthAdjust="spacing">Structural</text><text transform="translate(979.83,532.9) rotate(-90)" font-family="DejaVu Sans,sans-serif" font-size="4.9" fill="#3e3e3e" text-anchor="end" textLength="17.3" lengthAdjust="spacing">Names</text><text transform="translate(1000.75,532.9) rotate(-90)" font-family="DejaVu Sans,sans-serif" font-size="4.9" fill="#3e3e3e" text-anchor="end" textLength="39.0" lengthAdjust="spacing">SysGen Names</text><text transform="translate(1021.67,532.9) rotate(-90)" font-family="DejaVu Sans,sans-serif" font-size="4.9" fill="#3e3e3e" text-anchor="end" textLength="63.2" lengthAdjust="spacing">SysGen Names (Errors)</text><text transform="translate(1042.59,532.9) rotate(-90)" font-family="DejaVu Sans,sans-serif" font-size="4.9" fill="#3e3e3e" text-anchor="end" textLength="18.0" lengthAdjust="spacing">Macros</text><text transform="translate(1063.51,532.9) rotate(-90)" font-family="DejaVu Sans,sans-serif" font-size="4.9" fill="#3e3e3e" text-anchor="end" textLength="47.3" lengthAdjust="spacing">Data Connections</text><text transform="translate(1084.43,532.9) rotate(-90)" font-family="DejaVu Sans,sans-serif" font-size="4.9" fill="#3e3e3e" text-anchor="end" textLength="32.5" lengthAdjust="spacing">Cell Formats</text><text transform="translate(1105.35,532.9) rotate(-90)" font-family="DejaVu Sans,sans-serif" font-size="4.9" fill="#3e3e3e" text-anchor="end" textLength="40.8" lengthAdjust="spacing">Cell Protections</text><g clip-path="url(#cl)"><text transform="translate(1126.27,532.9) rotate(-90)" font-family="DejaVu Sans,sans-serif" font-size="4.9" fill="#3e3e3e" text-anchor="end" textLength="72.0" lengthAdjust="spacing">Sheet/Workbook Protection</text></g></svg>
<div class="a" style="left:0px;top:605.6px;width:1140px;height:12.4px;background:#f0f0f0;"></div>
<div class="t" style="left:2.40px;top:610.20px;font-size:7.1px;color:#111;font-family:'Liberation Sans',sans-serif;transform:scaleX(0.9700);">Ready - File 1: [3. Graphiques intermédiaires-avancés.xlsx] - File 2: [3. Graphiques intermédiaires-avancés.xlsx] - Total Displayed Items: 22</div>
<svg style="left:698.8px;top:336.6px" width="8" height="12" viewBox="0 0 8 12"><path d="M0.5 0.5v9.4l2.1-2 1.5 3.4 1.4-0.6-1.5-3.3h2.9z" fill="#fff" stroke="#444" stroke-width="0.7"/></svg>
</body></html>
